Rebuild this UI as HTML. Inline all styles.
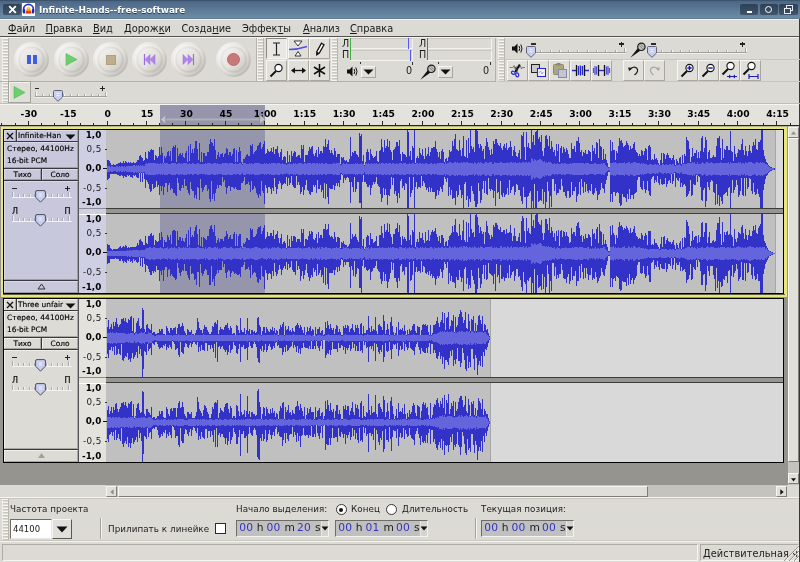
<!DOCTYPE html>
<html><head><meta charset="utf-8"><title>Infinite-Hands--free-software</title>
<style>
html,body{margin:0;padding:0;}
body{width:800px;height:562px;overflow:hidden;background:#dcdad5;position:relative;font-family:"DejaVu Sans","Liberation Sans",sans-serif;color:#1a1a1a;}
div,span,svg{position:absolute;box-sizing:border-box;}
.t{white-space:nowrap;line-height:1;}
.menu{font-size:9.8px;top:24px;color:#1a1a1a;}
.menu u{text-decoration:underline;text-underline-offset:1px;}
.grip{width:7px;background:repeating-linear-gradient(to bottom,#f6f5f2 0,#f6f5f2 1px,#c9c6bf 1px,#c9c6bf 2px,#dcdad5 2px,#dcdad5 3px);border-left:1px solid #efeeea;border-right:1px solid #b9b6af;}
.btn{background:#e1dfda;border:1px solid;border-color:#f7f6f3 #aaa79f #aaa79f #f7f6f3;}
.lbl{font-size:8.75px;color:#1c1c1c;letter-spacing:0.06px;}
.tl{font-size:7.4px;color:#000;-webkit-text-stroke:0.15px #000;}
.vr{font-size:8.8px;color:#222;letter-spacing:0.35px;}
.vrb{font-size:8.8px;font-weight:bold;color:#000;}
.rl{font-size:9.2px;font-weight:bold;color:#000;top:109.3px;}
.tc{height:17px;width:93px;background:#c0c0c0;border:1px solid;border-color:#6e6c67 #f4f3f0 #f4f3f0 #6e6c67;top:520px;}
.tc span{font-size:10.7px;top:1.5px;}
.tc .d{color:#3434c0;}
.tc .u{color:#222;}
#w{left:0;top:0;width:800px;height:562px;will-change:transform;}
</style></head><body><div id="w">

<div style="left:0;top:0;width:800px;height:19px;background:linear-gradient(to bottom,#2f4257 0,#496583 1px,#4d6987 2px,#5d7a97 10px,#6d8aa5 18px,#5a738c 19px);"></div>
<div style="left:3px;top:4px;width:18px;height:11px;border-radius:2px;background:linear-gradient(#2e4155,#41566c);"></div>
<svg style="left:8px;top:5px" width="9" height="9" viewBox="0 0 9 9"><path d="M1.2 1.2L7.8 7.8M7.8 1.2L1.2 7.8" stroke="#fff" stroke-width="1.9"/></svg>
<svg style="left:22px;top:3px" width="13" height="13" viewBox="0 0 13 13"><rect width="13" height="13" fill="#fff"/><path d="M1.6 9V6.2a4.9 4.9 0 0 1 9.8 0V9" fill="none" stroke="#2a35c8" stroke-width="1.7"/><rect x="0.8" y="6" width="2.4" height="4.6" rx="1" fill="#1c28b8"/><rect x="9.8" y="6" width="2.4" height="4.6" rx="1" fill="#1c28b8"/><path d="M3.4 10.2 5 5.2 6.5 3.4 8 5.2 9.6 10.2Z" fill="#f39a12"/><path d="M3.6 10.4 4.6 7.6 6.5 8.6 8.4 7.6 9.4 10.4Z" fill="#e4311a"/><path d="M5.3 5.4 6.5 3.6 7.7 5.4 6.5 6.4Z" fill="#ffd92e"/></svg>
<span class="t" style="left:39px;top:5.5px;font-size:8.9px;font-weight:bold;color:#fff;text-shadow:0 1px 0 #2c3f54;">Infinite-Hands--free-software</span>
<div style="left:740px;top:4px;width:18px;height:11px;border-radius:2px;background:linear-gradient(#2d4054,#40556b);"></div>
<div style="left:760px;top:4px;width:18px;height:11px;border-radius:2px;background:linear-gradient(#2d4054,#40556b);"></div>
<div style="left:779px;top:4px;width:19px;height:11px;border-radius:2px;background:linear-gradient(#2d4054,#40556b);"></div>
<div style="left:747px;top:11px;width:5px;height:2px;background:#fff;"></div>
<div style="left:765px;top:5.700px;width:7px;height:7px;border:1.700px solid #fff;border-radius:50%;"></div>
<div style="left:786px;top:5px;width:7px;height:6px;border:1px solid #e8edf2;border-top-width:1.500px;"></div>
<div style="left:783.500px;top:7.500px;width:7px;height:6px;border:1px solid #e8edf2;border-top-width:1.500px;background:#364b60;"></div>
<div style="left:0;top:19px;width:800px;height:17px;background:#dcdad5;border-top:1px solid #f3f2ef;"></div>
<span class="t menu" style="left:8px;"><u>Ф</u>айл</span>
<span class="t menu" style="left:45.5px;"><u>П</u>равка</span>
<span class="t menu" style="left:93px;"><u>В</u>ид</span>
<span class="t menu" style="left:124px;">Дорож<u>к</u>и</span>
<span class="t menu" style="left:181.5px;">Созда<u>н</u>ие</span>
<span class="t menu" style="left:242px;">Эффек<u>т</u>ы</span>
<span class="t menu" style="left:303px;"><u>А</u>нализ</span>
<span class="t menu" style="left:350px;"><u>С</u>правка</span>
<div style="left:0;top:36px;width:800px;height:1px;background:#55534f;"></div>
<div style="left:0;top:37px;width:800px;height:1px;background:#f4f3f0;"></div>
<div style="left:799px;top:19px;width:1px;height:543px;background:#3a3936;"></div>
<div class="grip" style="left:2px;top:38px;height:43px;"></div>
<div style="left:0px;top:81px;width:257px;height:1px;background:#b5b2ab;"></div>
<div style="left:256px;top:38px;width:1px;height:44px;background:#b5b2ab;"></div>
<div style="left:14.0px;top:41.5px;width:35px;height:35px;border-radius:50%;background:linear-gradient(135deg,rgba(255,255,255,0.75) 10%,rgba(255,255,255,0) 48%,rgba(0,0,0,0) 52%,rgba(60,55,45,0.22) 90%),radial-gradient(circle closest-side,#e6e4e0 0,#e6e4e0 60%,#d6d3cd 70%,#e9e7e3 82%,#d9d6d0 94%,#dcdad5 100%);"></div>
<div style="left:53.5px;top:41.5px;width:35px;height:35px;border-radius:50%;background:linear-gradient(135deg,rgba(255,255,255,0.75) 10%,rgba(255,255,255,0) 48%,rgba(0,0,0,0) 52%,rgba(60,55,45,0.22) 90%),radial-gradient(circle closest-side,#e6e4e0 0,#e6e4e0 60%,#d6d3cd 70%,#e9e7e3 82%,#d9d6d0 94%,#dcdad5 100%);"></div>
<div style="left:93.0px;top:41.5px;width:35px;height:35px;border-radius:50%;background:linear-gradient(135deg,rgba(255,255,255,0.75) 10%,rgba(255,255,255,0) 48%,rgba(0,0,0,0) 52%,rgba(60,55,45,0.22) 90%),radial-gradient(circle closest-side,#e6e4e0 0,#e6e4e0 60%,#d6d3cd 70%,#e9e7e3 82%,#d9d6d0 94%,#dcdad5 100%);"></div>
<div style="left:132.0px;top:41.5px;width:35px;height:35px;border-radius:50%;background:linear-gradient(135deg,rgba(255,255,255,0.75) 10%,rgba(255,255,255,0) 48%,rgba(0,0,0,0) 52%,rgba(60,55,45,0.22) 90%),radial-gradient(circle closest-side,#e6e4e0 0,#e6e4e0 60%,#d6d3cd 70%,#e9e7e3 82%,#d9d6d0 94%,#dcdad5 100%);"></div>
<div style="left:171.0px;top:41.5px;width:35px;height:35px;border-radius:50%;background:linear-gradient(135deg,rgba(255,255,255,0.75) 10%,rgba(255,255,255,0) 48%,rgba(0,0,0,0) 52%,rgba(60,55,45,0.22) 90%),radial-gradient(circle closest-side,#e6e4e0 0,#e6e4e0 60%,#d6d3cd 70%,#e9e7e3 82%,#d9d6d0 94%,#dcdad5 100%);"></div>
<div style="left:216.0px;top:41.5px;width:35px;height:35px;border-radius:50%;background:linear-gradient(135deg,rgba(255,255,255,0.75) 10%,rgba(255,255,255,0) 48%,rgba(0,0,0,0) 52%,rgba(60,55,45,0.22) 90%),radial-gradient(circle closest-side,#e6e4e0 0,#e6e4e0 60%,#d6d3cd 70%,#e9e7e3 82%,#d9d6d0 94%,#dcdad5 100%);"></div>
<div style="left:27px;top:55px;width:4px;height:9px;background:#3d5fe0;"></div><div style="left:33px;top:55px;width:4px;height:9px;background:#3d5fe0;"></div>
<svg style="left:65px;top:52px" width="13" height="15"><path d="M1 1.5L12 7.5L1 13.5Z" fill="#6bcf6b" stroke="#58b858" stroke-width="0.6"/></svg>
<div style="left:106px;top:55px;width:10px;height:10px;background:#bfae8c;border:1px solid #b0a080;"></div>
<svg style="left:143px;top:53px" width="13" height="13"><path d="M1.5 1V12" stroke="#9a6edc" stroke-width="1.2"/><path d="M7 1.5V11.5L2 6.5Z M12 1.5V11.5L7 6.5Z" fill="#b086ea" stroke="#9a6edc" stroke-width="0.5"/></svg>
<svg style="left:182px;top:53px" width="13" height="13"><path d="M11.5 1V12" stroke="#9a6edc" stroke-width="1.2"/><path d="M1 1.5V11.5L6 6.5Z M6 1.5V11.5L11 6.5Z" fill="#b086ea" stroke="#9a6edc" stroke-width="0.5"/></svg>
<div style="left:227px;top:53px;width:13px;height:13px;border-radius:50%;background:#c87878;border:1px solid #b86a6a;"></div>
<div class="grip" style="left:257px;top:38px;height:43px;"></div>
<div style="left:257px;top:81px;width:76px;height:1px;background:#b5b2ab;"></div>
<div style="left:331px;top:38px;width:1px;height:44px;background:#b5b2ab;"></div>
<div class="btn" style="left:266px;top:38px;width:21px;height:21px;"></div>
<div class="btn" style="left:288px;top:38px;width:21px;height:21px;"></div>
<div class="btn" style="left:309px;top:38px;width:21px;height:21px;"></div>
<div class="btn" style="left:266px;top:60px;width:21px;height:21px;"></div>
<div class="btn" style="left:288px;top:60px;width:21px;height:21px;"></div>
<div class="btn" style="left:309px;top:60px;width:21px;height:21px;"></div>
<div style="left:266px;top:38px;width:21px;height:21px;background:#e9e7e3;border:1px solid;border-color:#8d8a84 #f7f6f3 #f7f6f3 #8d8a84;"></div>
<svg style="left:272px;top:42px" width="9" height="14"><path d="M1 1H8M1 13H8M4.500 1V13" stroke="#222" stroke-width="1.150" fill="none"/></svg>
<svg style="left:288px;top:38px" width="21" height="21"><path d="M6 3H14L10 8Z" fill="#fff" stroke="#222" stroke-width="0.9"/><path d="M7 18H13L10 13.5Z" fill="#fff" stroke="#222" stroke-width="0.9"/><path d="M1 11.5Q10 11.5 19 8.5" stroke="#5050e8" stroke-width="1.5" fill="none"/></svg>
<svg style="left:309px;top:38px" width="21" height="21"><path d="M12.500 5.200L15 6.700L10.300 15L7.800 16.700L7.800 13.700Z" fill="#fff" stroke="#111" stroke-width="1.300"/><path d="M7.800 13.700L10.300 15L7.800 16.700Z" fill="#111"/></svg>
<svg style="left:266px;top:60px" width="21" height="21"><circle cx="12.5" cy="8" r="3.6" fill="#fff" stroke="#111" stroke-width="1.1"/><path d="M10 11L4.5 16.5" stroke="#111" stroke-width="1.8"/></svg>
<svg style="left:288px;top:60px" width="21" height="21"><path d="M4 10.5H17" stroke="#111" stroke-width="1.3"/><path d="M3 10.5L7 7.5V13.5Z M18 10.5L14 7.5V13.5Z" fill="#111"/></svg>
<svg style="left:309px;top:60px" width="21" height="21"><path d="M10.5 4V17M5 7L16 14M16 7L5 14" stroke="#111" stroke-width="1.5"/></svg>
<div class="grip" style="left:331px;top:38px;height:43px;"></div>
<div style="left:331px;top:81px;width:165px;height:1px;background:#b5b2ab;"></div>
<div style="left:495px;top:38px;width:1px;height:44px;background:#b5b2ab;"></div>
<span class="t" style="left:342px;top:39px;font-size:9.6px;">Л</span><span class="t" style="left:342px;top:50px;font-size:9.6px;">П</span>
<div style="left:350px;top:38px;width:63px;height:11px;background:#dcdad4;border-bottom:1px solid #f4f3f0;border-right:1px solid #f4f3f0;border-top:1px solid #c9c6c0;"></div>
<div style="left:350px;top:50px;width:63px;height:11px;background:#dcdad4;border-bottom:1px solid #f4f3f0;border-right:1px solid #f4f3f0;border-top:1px solid #c9c6c0;"></div>
<div style="left:350px;top:38px;width:1px;height:22px;background:#3fae3f;"></div>
<div style="left:408px;top:38px;width:1px;height:11px;background:#5656f2;"></div>
<div style="left:410px;top:50px;width:1px;height:11px;background:#5656f2;"></div>
<div style="left:360px;top:62px;width:1px;height:2px;background:#333;"></div>
<div style="left:412px;top:62px;width:1px;height:3px;background:#333;"></div>
<span class="t" style="left:406px;top:66px;font-size:9.6px;">0</span>
<svg style="left:346px;top:65px" width="13" height="13"><path d="M1 4.5H3.5L6.5 1.5V11.5L3.5 8.5H1Z" fill="#111"/><path d="M8 4Q9.6 6.5 8 9M9.8 2.5Q12.2 6.5 9.8 10.5" stroke="#111" stroke-width="1" fill="none"/></svg>
<div class="btn" style="left:361px;top:66px;width:15px;height:12px;"></div>
<svg style="left:363px;top:69px" width="11" height="6"><path d="M0.5 0.5H10.5L5.5 5.5Z" fill="#111"/></svg>
<span class="t" style="left:419px;top:39px;font-size:9.6px;">Л</span><span class="t" style="left:419px;top:50px;font-size:9.6px;">П</span>
<div style="left:427px;top:38px;width:65px;height:11px;background:#dcdad4;border-bottom:1px solid #f4f3f0;border-right:1px solid #f4f3f0;border-top:1px solid #c9c6c0;"></div>
<div style="left:427px;top:50px;width:65px;height:11px;background:#dcdad4;border-bottom:1px solid #f4f3f0;border-right:1px solid #f4f3f0;border-top:1px solid #c9c6c0;"></div>
<div style="left:427px;top:38px;width:1px;height:22px;background:#c04a4a;"></div>
<div style="left:438px;top:62px;width:1px;height:2px;background:#333;"></div>
<div style="left:490px;top:62px;width:1px;height:3px;background:#333;"></div>
<span class="t" style="left:483px;top:66px;font-size:9.6px;">0</span>
<svg style="left:420px;top:64px" width="17" height="17"><path d="M0.300 15.700L8.300 5.600L10.900 8.200Z" fill="#111"/><circle cx="11.400" cy="4.800" r="3.700" fill="#c4c4c4" stroke="#1a1a1a" stroke-width="1.200"/><path d="M9.200 3.400L12.800 7M10.600 2.200L13.800 5.400" stroke="#777" stroke-width="0.900"/></svg>
<div class="btn" style="left:438px;top:66px;width:15px;height:12px;"></div>
<svg style="left:440px;top:69px" width="11" height="6"><path d="M0.5 0.5H10.5L5.5 5.5Z" fill="#111"/></svg>
<div class="grip" style="left:498px;top:38px;height:21px;"></div>
<div style="left:498px;top:59px;width:302px;height:1px;background:#c9c6c0;"></div>
<svg style="left:511px;top:42px" width="13" height="13"><path d="M1 4.5H3.5L6.5 1.5V11.5L3.5 8.5H1Z" fill="#111"/><path d="M8 4Q9.6 6.5 8 9M9.8 2.5Q12.2 6.5 9.8 10.5" stroke="#111" stroke-width="1" fill="none"/></svg>
<div style="left:527px;top:52px;width:99px;height:1px;background:#a3a19b;"></div>
<div style="left:527px;top:53px;width:99px;height:1px;background:#efeeea;"></div>
<div style="left:531px;top:48px;width:1px;height:4px;background:#a9a7a1;"></div>
<div style="left:532px;top:48px;width:1px;height:4px;background:#fbfaf8;"></div>
<div style="left:540px;top:50px;width:1px;height:2px;background:#a9a7a1;"></div>
<div style="left:541px;top:50px;width:1px;height:2px;background:#fbfaf8;"></div>
<div style="left:550px;top:50px;width:1px;height:2px;background:#a9a7a1;"></div>
<div style="left:551px;top:50px;width:1px;height:2px;background:#fbfaf8;"></div>
<div style="left:559px;top:50px;width:1px;height:2px;background:#a9a7a1;"></div>
<div style="left:560px;top:50px;width:1px;height:2px;background:#fbfaf8;"></div>
<div style="left:568px;top:50px;width:1px;height:2px;background:#a9a7a1;"></div>
<div style="left:569px;top:50px;width:1px;height:2px;background:#fbfaf8;"></div>
<div style="left:577px;top:50px;width:1px;height:2px;background:#a9a7a1;"></div>
<div style="left:578px;top:50px;width:1px;height:2px;background:#fbfaf8;"></div>
<div style="left:587px;top:50px;width:1px;height:2px;background:#a9a7a1;"></div>
<div style="left:588px;top:50px;width:1px;height:2px;background:#fbfaf8;"></div>
<div style="left:596px;top:50px;width:1px;height:2px;background:#a9a7a1;"></div>
<div style="left:597px;top:50px;width:1px;height:2px;background:#fbfaf8;"></div>
<div style="left:605px;top:50px;width:1px;height:2px;background:#a9a7a1;"></div>
<div style="left:606px;top:50px;width:1px;height:2px;background:#fbfaf8;"></div>
<div style="left:615px;top:50px;width:1px;height:2px;background:#a9a7a1;"></div>
<div style="left:616px;top:50px;width:1px;height:2px;background:#fbfaf8;"></div>
<div style="left:624px;top:48px;width:1px;height:4px;background:#a9a7a1;"></div>
<div style="left:625px;top:48px;width:1px;height:4px;background:#fbfaf8;"></div>
<svg style="left:526px;top:45.7px" width="10" height="12"><path d="M1.500 0.500H8.500Q9.500 0.500 9.500 1.500V7L5 11.300L0.500 7V1.500Q0.500 0.500 1.500 0.500Z" fill="#cbcfee" stroke="#55596e" stroke-width="0.9"/><path d="M3.500 3.500H6.500M3.500 5.500H6.500" stroke="#f4f5fc" stroke-width="0.9"/></svg>
<div style="left:531px;top:43.0px;width:4.500px;height:1.500px;background:#2a2a2a;"></div>
<div style="left:619px;top:43.3px;width:5px;height:1.400px;background:#222;"></div><div style="left:620.8px;top:41.5px;width:1.400px;height:5px;background:#222;"></div>
<svg style="left:630px;top:41.5px" width="17" height="17"><path d="M0.300 15.700L8.300 5.600L10.900 8.200Z" fill="#111"/><circle cx="11.400" cy="4.800" r="3.700" fill="#c4c4c4" stroke="#1a1a1a" stroke-width="1.200"/><path d="M9.200 3.400L12.800 7M10.600 2.200L13.800 5.400" stroke="#777" stroke-width="0.900"/></svg>
<div style="left:648px;top:52px;width:99px;height:1px;background:#a3a19b;"></div>
<div style="left:648px;top:53px;width:99px;height:1px;background:#efeeea;"></div>
<div style="left:652px;top:48px;width:1px;height:4px;background:#a9a7a1;"></div>
<div style="left:653px;top:48px;width:1px;height:4px;background:#fbfaf8;"></div>
<div style="left:661px;top:50px;width:1px;height:2px;background:#a9a7a1;"></div>
<div style="left:662px;top:50px;width:1px;height:2px;background:#fbfaf8;"></div>
<div style="left:671px;top:50px;width:1px;height:2px;background:#a9a7a1;"></div>
<div style="left:672px;top:50px;width:1px;height:2px;background:#fbfaf8;"></div>
<div style="left:680px;top:50px;width:1px;height:2px;background:#a9a7a1;"></div>
<div style="left:681px;top:50px;width:1px;height:2px;background:#fbfaf8;"></div>
<div style="left:689px;top:50px;width:1px;height:2px;background:#a9a7a1;"></div>
<div style="left:690px;top:50px;width:1px;height:2px;background:#fbfaf8;"></div>
<div style="left:698px;top:50px;width:1px;height:2px;background:#a9a7a1;"></div>
<div style="left:699px;top:50px;width:1px;height:2px;background:#fbfaf8;"></div>
<div style="left:708px;top:50px;width:1px;height:2px;background:#a9a7a1;"></div>
<div style="left:709px;top:50px;width:1px;height:2px;background:#fbfaf8;"></div>
<div style="left:717px;top:50px;width:1px;height:2px;background:#a9a7a1;"></div>
<div style="left:718px;top:50px;width:1px;height:2px;background:#fbfaf8;"></div>
<div style="left:726px;top:50px;width:1px;height:2px;background:#a9a7a1;"></div>
<div style="left:727px;top:50px;width:1px;height:2px;background:#fbfaf8;"></div>
<div style="left:736px;top:50px;width:1px;height:2px;background:#a9a7a1;"></div>
<div style="left:737px;top:50px;width:1px;height:2px;background:#fbfaf8;"></div>
<div style="left:745px;top:48px;width:1px;height:4px;background:#a9a7a1;"></div>
<div style="left:746px;top:48px;width:1px;height:4px;background:#fbfaf8;"></div>
<svg style="left:647px;top:45.7px" width="10" height="12"><path d="M1.500 0.500H8.500Q9.500 0.500 9.500 1.500V7L5 11.300L0.500 7V1.500Q0.500 0.500 1.500 0.500Z" fill="#cbcfee" stroke="#55596e" stroke-width="0.9"/><path d="M3.500 3.500H6.500M3.500 5.500H6.500" stroke="#f4f5fc" stroke-width="0.9"/></svg>
<div style="left:651px;top:43.0px;width:4.500px;height:1.500px;background:#2a2a2a;"></div>
<div style="left:740px;top:43.3px;width:5px;height:1.400px;background:#222;"></div><div style="left:741.8px;top:41.5px;width:1.400px;height:5px;background:#222;"></div>
<div class="grip" style="left:498px;top:60px;height:21px;"></div>
<div style="left:498px;top:81px;width:302px;height:1px;background:#c9c6c0;"></div>
<div class="btn" style="left:507px;top:60px;width:21px;height:21px;"></div>
<div class="btn" style="left:528px;top:60px;width:21px;height:21px;"></div>
<div class="btn" style="left:549px;top:60px;width:21px;height:21px;"></div>
<div class="btn" style="left:570px;top:60px;width:21px;height:21px;"></div>
<div class="btn" style="left:591px;top:60px;width:21px;height:21px;"></div>
<div class="btn" style="left:623px;top:60px;width:21px;height:21px;"></div>
<div class="btn" style="left:644px;top:60px;width:21px;height:21px;"></div>
<div class="btn" style="left:677px;top:60px;width:21px;height:21px;"></div>
<div class="btn" style="left:698px;top:60px;width:21px;height:21px;"></div>
<div class="btn" style="left:719px;top:60px;width:21px;height:21px;"></div>
<div class="btn" style="left:740px;top:60px;width:21px;height:21px;"></div>
<svg style="left:507px;top:60px" width="21" height="21"><path d="M2.500 7.500H6L7 5.500L8.200 9.500L9.200 6.500L10 7.500M12.500 7.500L13.500 6L14.500 9L15.300 7.500H18" stroke="#555" stroke-width="0.700" fill="none"/><path d="M12.800 4.500L8.300 12" stroke="#111" stroke-width="2.100"/><path d="M8.500 7L10.500 11.500" stroke="#333" stroke-width="0.900"/><ellipse cx="6.300" cy="12.800" rx="1.900" ry="1.500" transform="rotate(25 6.300 12.800)" fill="none" stroke="#2a2ad8" stroke-width="1.200"/><ellipse cx="10.200" cy="14.800" rx="1.500" ry="2" transform="rotate(-20 10.200 14.800)" fill="none" stroke="#2a2ad8" stroke-width="1.200"/></svg>
<svg style="left:528px;top:60px" width="21" height="21"><rect x="3.5" y="4.5" width="8" height="8" fill="#c9c9c9" stroke="#222" stroke-width="1"/><rect x="9.500" y="8.500" width="8" height="8" fill="#f4f4ff" stroke="#2828d0" stroke-width="1.1"/><path d="M11 13L12.5 11L14 14L15.5 12" stroke="#7a7ad8" stroke-width="0.7" fill="none"/></svg>
<svg style="left:549px;top:60px" width="21" height="21"><rect x="4.500" y="4.500" width="10" height="10" rx="1" fill="#a9a684" stroke="#8d8a6c" stroke-width="1"/><rect x="7.5" y="3" width="4" height="2.500" fill="#8d8a6c"/><rect x="9.500" y="9.500" width="8" height="8" fill="#c5c5d0" stroke="#8585b8" stroke-width="1"/></svg>
<svg style="left:570px;top:60px" width="21" height="21"><path d="M2 10.5H6M15 10.5H19" stroke="#2828d0" stroke-width="1.3"/><path d="M6.5 5V16M14.5 5V16" stroke="#111" stroke-width="1.3"/><path d="M8.5 6V15M10.5 5.500V15.5M12.5 6V15" stroke="#2828d0" stroke-width="1.3"/></svg>
<svg style="left:591px;top:60px" width="21" height="21"><path d="M7 10.5H14" stroke="#2828d0" stroke-width="1.3"/><path d="M7.5 5V16M13.5 5V16" stroke="#111" stroke-width="1.3"/><path d="M2.5 8V13M4 6V15M5.5 6.5V14.5M15.5 6.5V14.5M17 6V15M18.500 8V13" stroke="#5050d8" stroke-width="1.2"/></svg>
<svg style="left:623px;top:60px" width="21" height="21"><path d="M7 9.500Q10.500 5.500 13.500 8Q16.500 11 11.500 15" stroke="#222" stroke-width="1.250" fill="none"/><path d="M5 7.500L9.300 7.700L6.200 11.300Z" fill="#222"/></svg>
<svg style="left:644px;top:60px" width="21" height="21"><path d="M14 9.500Q10.500 5.500 7.500 8Q4.500 11 9.500 15" stroke="#a9a7a1" stroke-width="1.250" fill="none"/><path d="M16 7.500L11.700 7.700L14.800 11.300Z" fill="#a9a7a1"/></svg>
<svg style="left:677px;top:60px" width="21" height="21"><g transform="translate(0 0)"><circle cx="12.5" cy="8" r="3.600" fill="#fff" stroke="#111" stroke-width="1.1"/><path d="M10 11L4.500 16.500" stroke="#111" stroke-width="1.9"/></g><path d="M10.300 8H14.700M12.500 5.800V10.200" stroke="#1c1cb8" stroke-width="1.500"/></svg>
<svg style="left:698px;top:60px" width="21" height="21"><g transform="translate(0 0)"><circle cx="12.5" cy="8" r="3.600" fill="#fff" stroke="#111" stroke-width="1.1"/><path d="M10 11L4.500 16.500" stroke="#111" stroke-width="1.9"/></g><path d="M10.300 8H14.700" stroke="#1c1cb8" stroke-width="1.500"/></svg>
<svg style="left:719px;top:60px" width="21" height="21"><g transform="translate(-1 -2)"><circle cx="12.5" cy="8" r="3.600" fill="#fff" stroke="#111" stroke-width="1.1"/><path d="M10 11L4.500 16.500" stroke="#111" stroke-width="1.9"/></g><path d="M8 16.500H18" stroke="#1c1cb8" stroke-width="1"/><path d="M12.500 16.500L10 14.500V18.500ZM13.500 16.500L16 14.500V18.500Z" fill="#1c1cb8"/></svg>
<svg style="left:740px;top:60px" width="21" height="21"><g transform="translate(-1 -2)"><circle cx="12.5" cy="8" r="3.600" fill="#fff" stroke="#111" stroke-width="1.1"/><path d="M10 11L4.500 16.500" stroke="#111" stroke-width="1.9"/></g><path d="M9 16.500H18M9 14V19M18 14V19" stroke="#1c1cb8" stroke-width="1.2"/></svg>
<div class="grip" style="left:2px;top:82px;height:21px;"></div>
<div style="left:0px;top:103px;width:800px;height:1px;background:#c2bfb8;"></div>
<div style="left:8px;top:81px;width:23px;height:22px;background:#e0ded9;border:1px solid #a5a39d;box-shadow:inset 1px 1px 0 #f3f2ef;"></div>
<svg style="left:13px;top:85px" width="13" height="15"><path d="M1 1.500L12 7.500L1 13.500Z" fill="#6bcf6b" stroke="#58b858" stroke-width="0.6"/></svg>
<div style="left:35px;top:96px;width:72px;height:1px;background:#a3a19b;"></div>
<div style="left:35px;top:97px;width:72px;height:1px;background:#efeeea;"></div>
<div style="left:35px;top:92px;width:1px;height:4px;background:#a9a7a1;"></div>
<div style="left:36px;top:92px;width:1px;height:4px;background:#fbfaf8;"></div>
<div style="left:42px;top:94px;width:1px;height:2px;background:#a9a7a1;"></div>
<div style="left:43px;top:94px;width:1px;height:2px;background:#fbfaf8;"></div>
<div style="left:49px;top:94px;width:1px;height:2px;background:#a9a7a1;"></div>
<div style="left:50px;top:94px;width:1px;height:2px;background:#fbfaf8;"></div>
<div style="left:56px;top:94px;width:1px;height:2px;background:#a9a7a1;"></div>
<div style="left:57px;top:94px;width:1px;height:2px;background:#fbfaf8;"></div>
<div style="left:63px;top:94px;width:1px;height:2px;background:#a9a7a1;"></div>
<div style="left:64px;top:94px;width:1px;height:2px;background:#fbfaf8;"></div>
<div style="left:70px;top:94px;width:1px;height:2px;background:#a9a7a1;"></div>
<div style="left:71px;top:94px;width:1px;height:2px;background:#fbfaf8;"></div>
<div style="left:77px;top:94px;width:1px;height:2px;background:#a9a7a1;"></div>
<div style="left:78px;top:94px;width:1px;height:2px;background:#fbfaf8;"></div>
<div style="left:84px;top:94px;width:1px;height:2px;background:#a9a7a1;"></div>
<div style="left:85px;top:94px;width:1px;height:2px;background:#fbfaf8;"></div>
<div style="left:91px;top:94px;width:1px;height:2px;background:#a9a7a1;"></div>
<div style="left:92px;top:94px;width:1px;height:2px;background:#fbfaf8;"></div>
<div style="left:98px;top:94px;width:1px;height:2px;background:#a9a7a1;"></div>
<div style="left:99px;top:94px;width:1px;height:2px;background:#fbfaf8;"></div>
<div style="left:105px;top:92px;width:1px;height:4px;background:#a9a7a1;"></div>
<div style="left:106px;top:92px;width:1px;height:4px;background:#fbfaf8;"></div>
<svg style="left:52.5px;top:90px" width="10" height="12"><path d="M1.500 0.500H8.500Q9.500 0.500 9.500 1.500V7L5 11.300L0.500 7V1.500Q0.500 0.500 1.500 0.500Z" fill="#cbcfee" stroke="#55596e" stroke-width="0.9"/><path d="M3.500 3.500H6.500M3.500 5.500H6.500" stroke="#f4f5fc" stroke-width="0.9"/></svg>
<div style="left:34.5px;top:87.5px;width:4.500px;height:1.500px;background:#2a2a2a;"></div>
<div style="left:100px;top:87.8px;width:5px;height:1.400px;background:#222;"></div><div style="left:101.8px;top:86px;width:1.400px;height:5px;background:#222;"></div>
<div style="left:0;top:104px;width:799px;height:21px;background:#e4e2dd;border-top:1px solid #f6f5f2;"></div>
<div style="left:160px;top:105px;width:105px;height:20px;background:#9595ae;"></div>
<div style="left:0px;top:125px;width:800px;height:1px;background:#262523;"></div>
<svg style="left:0;top:119px" width="800" height="6" shape-rendering="crispEdges"><path d="M1.5 4V6M15.5 4V6M28.5 2V6M41.5 4V6M54.5 4V6M67.5 2V6M80.5 4V6M93.5 4V6M107.5 2V6M120.5 4V6M133.5 4V6M146.5 2V6M159.5 4V6M172.5 4V6M185.5 2V6M198.5 4V6M212.5 4V6M225.5 2V6M238.5 4V6M251.5 4V6M264.5 2V6M277.5 4V6M290.5 4V6M304.5 2V6M317.5 4V6M330.5 4V6M343.5 2V6M356.5 4V6M369.5 4V6M382.5 2V6M395.5 4V6M409.5 4V6M422.5 2V6M435.5 4V6M448.5 4V6M461.5 2V6M474.5 4V6M487.5 4V6M501.5 2V6M514.5 4V6M527.5 4V6M540.5 2V6M553.5 4V6M566.5 4V6M579.5 2V6M593.5 4V6M606.5 4V6M619.5 2V6M632.5 4V6M645.5 4V6M658.5 2V6M671.5 4V6M684.5 4V6M698.5 2V6M711.5 4V6M724.5 4V6M737.5 2V6M750.5 4V6M763.5 4V6M776.5 2V6M790.5 4V6" stroke="#2b2a28" stroke-width="1"/></svg>
<span class="t rl" style="left:-1.1px;width:60px;text-align:center;">-30</span>
<span class="t rl" style="left:38.3px;width:60px;text-align:center;">-15</span>
<span class="t rl" style="left:77.7px;width:60px;text-align:center;">0</span>
<span class="t rl" style="left:117.1px;width:60px;text-align:center;">15</span>
<span class="t rl" style="left:156.5px;width:60px;text-align:center;">30</span>
<span class="t rl" style="left:195.9px;width:60px;text-align:center;">45</span>
<span class="t rl" style="left:235.3px;width:60px;text-align:center;">1:00</span>
<span class="t rl" style="left:274.7px;width:60px;text-align:center;">1:15</span>
<span class="t rl" style="left:314.1px;width:60px;text-align:center;">1:30</span>
<span class="t rl" style="left:353.5px;width:60px;text-align:center;">1:45</span>
<span class="t rl" style="left:392.9px;width:60px;text-align:center;">2:00</span>
<span class="t rl" style="left:432.4px;width:60px;text-align:center;">2:15</span>
<span class="t rl" style="left:471.8px;width:60px;text-align:center;">2:30</span>
<span class="t rl" style="left:511.2px;width:60px;text-align:center;">2:45</span>
<span class="t rl" style="left:550.6px;width:60px;text-align:center;">3:00</span>
<span class="t rl" style="left:590.0px;width:60px;text-align:center;">3:15</span>
<span class="t rl" style="left:629.4px;width:60px;text-align:center;">3:30</span>
<span class="t rl" style="left:668.8px;width:60px;text-align:center;">3:45</span>
<span class="t rl" style="left:708.2px;width:60px;text-align:center;">4:00</span>
<span class="t rl" style="left:747.6px;width:60px;text-align:center;">4:15</span>
<svg style="left:158px;top:113.500px" width="110" height="11"><path d="M8 5.500H101" stroke="#b2b2b0" stroke-width="1.800"/><path d="M2.300 5.500L7.800 0.500V10.500Z" fill="#c2c2c6" stroke="#8a8a98" stroke-width="0.800"/><path d="M107.200 5.500L101.700 0.500V10.500Z" fill="#c2c2c6" stroke="#8a8a98" stroke-width="0.800"/></svg>
<div style="left:0;top:126px;width:788px;height:359px;background:#95948f;"></div>
<div style="left:1px;top:126px;width:786px;height:171px;background:#e7e77e;border-top:1px solid #b6b684;"></div>
<div style="left:3px;top:129px;width:781px;height:165px;background:#000;"></div>
<div style="left:4px;top:130px;width:74px;height:163px;background:#c8c8dc;"></div>
<div style="left:78px;top:130px;width:1px;height:163px;background:#55555a;"></div>
<div style="left:79px;top:130px;width:27px;height:163px;background:#cfcfe4;"></div>
<div style="left:79px;top:208px;width:27px;height:1px;background:#8c8c96;"></div>
<div style="left:79px;top:214px;width:27px;height:1px;background:#fff;"></div>
<div style="left:4px;top:130px;width:12px;height:12px;border:1px solid;border-color:#dadaea #9c9cac #9c9cac #dadaea;"></div>
<div style="left:17px;top:130px;width:61px;height:12px;border:1px solid;border-color:#dadaea #9c9cac #9c9cac #dadaea;"></div>
<div style="left:4px;top:141px;width:74px;height:1px;background:#3a3a3e;"></div>
<div style="left:16px;top:130px;width:1px;height:11px;background:#3a3a3e;"></div>
<svg style="left:6px;top:132px" width="8" height="8"><path d="M1 1L7 7M7 1L1 7" stroke="#111" stroke-width="1.3"/></svg>
<span class="t tl" style="left:18px;top:132px;">Infinite-Han</span>
<svg style="left:65px;top:134px" width="11" height="6"><path d="M0.500 0.500H10.500L5.500 5.500Z" fill="#111"/></svg>
<div style="left:4px;top:142px;width:74px;height:26px;border:1px solid;border-color:#dadaea #9c9cac #9c9cac #dadaea;"></div>
<span class="t tl" style="left:7px;top:145px;letter-spacing:0.1px;">Стерео, 44100Hz</span>
<span class="t tl" style="left:7px;top:157px;">16-bit PCM</span>
<div style="left:4px;top:168px;width:74px;height:1px;background:#3a3a3e;"></div>
<div style="left:4px;top:169px;width:37px;height:11px;border:1px solid;border-color:#dadaea #9c9cac #9c9cac #dadaea;"></div>
<div style="left:42px;top:169px;width:36px;height:11px;border:1px solid;border-color:#dadaea #9c9cac #9c9cac #dadaea;"></div>
<div style="left:41px;top:169px;width:1px;height:11px;background:#3a3a3e;"></div>
<span class="t tl" style="left:4px;width:37px;text-align:center;top:171px;">Тихо</span>
<span class="t tl" style="left:42px;width:36px;text-align:center;top:171px;">Соло</span>
<div style="left:4px;top:180px;width:74px;height:1px;background:#3a3a3e;"></div>
<div style="left:4px;top:181px;width:74px;height:99px;border:1px solid;border-color:#dadaea #9c9cac #9c9cac #dadaea;"></div>
<div style="left:12px;top:197px;width:60px;height:1px;background:#f3f3ea;"></div>
<div style="left:12px;top:192px;width:1px;height:5px;background:#a9a9b8;"></div>
<div style="left:13px;top:192px;width:1px;height:5px;background:#f1f1e4;"></div>
<div style="left:18px;top:194px;width:1px;height:3px;background:#a9a9b8;"></div>
<div style="left:19px;top:194px;width:1px;height:3px;background:#f1f1e4;"></div>
<div style="left:23px;top:194px;width:1px;height:3px;background:#a9a9b8;"></div>
<div style="left:24px;top:194px;width:1px;height:3px;background:#f1f1e4;"></div>
<div style="left:29px;top:194px;width:1px;height:3px;background:#a9a9b8;"></div>
<div style="left:30px;top:194px;width:1px;height:3px;background:#f1f1e4;"></div>
<div style="left:34px;top:194px;width:1px;height:3px;background:#a9a9b8;"></div>
<div style="left:35px;top:194px;width:1px;height:3px;background:#f1f1e4;"></div>
<div style="left:40px;top:194px;width:1px;height:3px;background:#a9a9b8;"></div>
<div style="left:41px;top:194px;width:1px;height:3px;background:#f1f1e4;"></div>
<div style="left:46px;top:194px;width:1px;height:3px;background:#a9a9b8;"></div>
<div style="left:47px;top:194px;width:1px;height:3px;background:#f1f1e4;"></div>
<div style="left:51px;top:194px;width:1px;height:3px;background:#a9a9b8;"></div>
<div style="left:52px;top:194px;width:1px;height:3px;background:#f1f1e4;"></div>
<div style="left:57px;top:194px;width:1px;height:3px;background:#a9a9b8;"></div>
<div style="left:58px;top:194px;width:1px;height:3px;background:#f1f1e4;"></div>
<div style="left:62px;top:194px;width:1px;height:3px;background:#a9a9b8;"></div>
<div style="left:63px;top:194px;width:1px;height:3px;background:#f1f1e4;"></div>
<div style="left:68px;top:192px;width:1px;height:5px;background:#a9a9b8;"></div>
<div style="left:69px;top:192px;width:1px;height:5px;background:#f1f1e4;"></div>
<svg style="left:35px;top:190px" width="11" height="13"><path d="M2 0.600H9Q10.400 0.600 10.400 2V7.200L5.500 12.200L0.600 7.200V2Q0.600 0.600 2 0.600Z" fill="#cbcfee" stroke="#4c4f63" stroke-width="1"/><path d="M4 4H7M4 6H7" stroke="#f4f5fc" stroke-width="0.9"/></svg>
<div style="left:12px;top:187.5px;width:4.500px;height:1.500px;background:#2a2a2a;"></div>
<div style="left:65px;top:187.8px;width:5px;height:1.400px;background:#222;"></div><div style="left:66.8px;top:186px;width:1.400px;height:5px;background:#222;"></div>
<span class="t tl" style="left:12px;top:208px;font-size:8px;">Л</span><span class="t tl" style="left:64.500px;top:208px;font-size:8px;">П</span>
<div style="left:12px;top:221px;width:60px;height:1px;background:#f3f3ea;"></div>
<div style="left:12px;top:216px;width:1px;height:5px;background:#a9a9b8;"></div>
<div style="left:13px;top:216px;width:1px;height:5px;background:#f1f1e4;"></div>
<div style="left:18px;top:218px;width:1px;height:3px;background:#a9a9b8;"></div>
<div style="left:19px;top:218px;width:1px;height:3px;background:#f1f1e4;"></div>
<div style="left:23px;top:218px;width:1px;height:3px;background:#a9a9b8;"></div>
<div style="left:24px;top:218px;width:1px;height:3px;background:#f1f1e4;"></div>
<div style="left:29px;top:218px;width:1px;height:3px;background:#a9a9b8;"></div>
<div style="left:30px;top:218px;width:1px;height:3px;background:#f1f1e4;"></div>
<div style="left:34px;top:218px;width:1px;height:3px;background:#a9a9b8;"></div>
<div style="left:35px;top:218px;width:1px;height:3px;background:#f1f1e4;"></div>
<div style="left:40px;top:218px;width:1px;height:3px;background:#a9a9b8;"></div>
<div style="left:41px;top:218px;width:1px;height:3px;background:#f1f1e4;"></div>
<div style="left:46px;top:218px;width:1px;height:3px;background:#a9a9b8;"></div>
<div style="left:47px;top:218px;width:1px;height:3px;background:#f1f1e4;"></div>
<div style="left:51px;top:218px;width:1px;height:3px;background:#a9a9b8;"></div>
<div style="left:52px;top:218px;width:1px;height:3px;background:#f1f1e4;"></div>
<div style="left:57px;top:218px;width:1px;height:3px;background:#a9a9b8;"></div>
<div style="left:58px;top:218px;width:1px;height:3px;background:#f1f1e4;"></div>
<div style="left:62px;top:218px;width:1px;height:3px;background:#a9a9b8;"></div>
<div style="left:63px;top:218px;width:1px;height:3px;background:#f1f1e4;"></div>
<div style="left:68px;top:216px;width:1px;height:5px;background:#a9a9b8;"></div>
<div style="left:69px;top:216px;width:1px;height:5px;background:#f1f1e4;"></div>
<svg style="left:35px;top:214px" width="11" height="13"><path d="M2 0.600H9Q10.400 0.600 10.400 2V7.200L5.500 12.200L0.600 7.200V2Q0.600 0.600 2 0.600Z" fill="#cbcfee" stroke="#4c4f63" stroke-width="1"/><path d="M4 4H7M4 6H7" stroke="#f4f5fc" stroke-width="0.9"/></svg>
<div style="left:4px;top:280px;width:74px;height:1px;background:#3a3a3e;"></div>
<div style="left:4px;top:281px;width:74px;height:12px;border:1px solid;border-color:#dadaea #9c9cac #9c9cac #dadaea;"></div>
<svg style="left:37px;top:283px" width="9" height="7"><path d="M4.500 1L8 6H1Z" fill="#c8c8dc" stroke="#333" stroke-width="1"/></svg>
<svg style="left:106px;top:130px" width="677" height="78" shape-rendering="crispEdges"><rect x="0" y="0" width="669" height="78" fill="#c0c0c0"/><rect x="669" y="0" width="8" height="78" fill="#d9d9d9"/><rect x="669" y="0" width="1" height="78" fill="#a6a6a6"/><rect x="54" y="0" width="105" height="78" fill="#9595ac"/><path d="M1.5 30V50M2.5 30V49M3.5 31V48M4.5 33V44M5.5 35V44M6.5 35V44M7.5 34V44M8.5 35V44M9.5 35V44M10.5 34V44M11.5 34V45M12.5 33V45M13.5 33V46M14.5 32V46M15.5 33V45M16.5 33V46M17.5 31V48M18.5 33V46M19.5 31V47M20.5 32V47M21.5 33V45M22.5 32V46M23.5 33V45M24.5 32V47M25.5 33V47M26.5 33V48M27.5 32V45M28.5 33V46M29.5 33V45M30.5 32V47M31.5 30V48M32.5 30V48M33.5 26V43M34.5 25V52M35.5 27V43M36.5 28V52M37.5 31V43M38.5 30V49M39.5 22V58M40.5 28V50M41.5 29V52M42.5 21V54M43.5 22V59M44.5 20V62M45.5 19V61M46.5 20V54M47.5 20V59M48.5 30V58M49.5 25V57M50.5 26V51M51.5 28V57M52.5 26V55M53.5 17V65M54.5 25V56M55.5 17V61M56.5 23V56M57.5 33V65M58.5 26V57M59.5 28V53M60.5 26V53M61.5 22V62M62.5 21V55M63.5 26V53M64.5 21V60M65.5 31V58M66.5 18V59M67.5 16V63M68.5 17V63M69.5 15V65M70.5 32V66M71.5 18V48M72.5 26V53M73.5 24V60M74.5 23V61M75.5 25V58M76.5 23V55M77.5 27V58M78.5 28V49M79.5 23V56M80.5 21V56M81.5 32V60M82.5 16V63M83.5 31V65M84.5 14V52M85.5 23V59M86.5 19V61M87.5 23V61M88.5 18V68M89.5 11V65M90.5 11V69M91.5 19V57M92.5 30V58M93.5 13V70M94.5 32V49M95.5 22V58M96.5 32V62M97.5 23V60M98.5 23V57M99.5 26V55M100.5 26V55M101.5 22V61M102.5 22V59M103.5 14V69M104.5 9V72M105.5 12V51M106.5 13V69M107.5 16V64M108.5 9V71M109.5 20V63M110.5 29V59M111.5 25V55M112.5 22V58M113.5 27V55M114.5 24V55M115.5 24V56M116.5 23V47M117.5 27V52M118.5 24V50M119.5 23V57M120.5 18V64M121.5 19V58M122.5 25V56M123.5 22V56M124.5 22V61M125.5 26V57M126.5 24V57M127.5 19V58M128.5 18V59M129.5 32V57M130.5 20V59M131.5 32V60M132.5 22V60M133.5 17V60M134.5 21V60M135.5 32V53M136.5 34V53M137.5 29V51M138.5 29V47M139.5 27V55M140.5 25V54M141.5 24V54M142.5 26V52M143.5 26V55M144.5 15V62M145.5 16V51M146.5 14V60M147.5 24V59M148.5 22V56M149.5 21V58M150.5 20V63M151.5 16V65M152.5 15V68M153.5 13V64M154.5 12V66M155.5 19V51M156.5 17V61M157.5 14V63M158.5 11V74M159.5 24V55M160.5 23V58M161.5 19V63M162.5 21V57M163.5 22V57M164.5 21V59M165.5 18V64M166.5 22V58M167.5 17V61M168.5 24V48M169.5 19V57M170.5 19V64M171.5 16V59M172.5 23V54M173.5 27V51M174.5 22V53M175.5 19V59M176.5 30V55M177.5 27V54M178.5 26V53M179.5 27V54M180.5 33V47M181.5 21V56M182.5 32V48M183.5 25V55M184.5 32V53M185.5 21V46M186.5 26V55M187.5 23V57M188.5 21V58M189.5 22V58M190.5 27V46M191.5 26V55M192.5 25V52M193.5 25V55M194.5 28V64M195.5 15V62M196.5 19V57M197.5 15V65M198.5 32V60M199.5 25V55M200.5 25V50M201.5 25V60M202.5 21V61M203.5 17V64M204.5 19V65M205.5 17V62M206.5 16V62M207.5 24V55M208.5 26V57M209.5 23V55M210.5 20V63M211.5 27V50M212.5 17V59M213.5 24V59M214.5 21V55M215.5 21V62M216.5 23V60M217.5 16V68M218.5 17V53M219.5 9V69M220.5 17V54M221.5 14V67M222.5 10V74M223.5 20V58M224.5 23V59M225.5 20V59M226.5 23V59M227.5 25V55M228.5 18V60M229.5 21V56M230.5 27V53M231.5 24V56M232.5 24V53M233.5 24V57M234.5 34V50M235.5 27V44M236.5 28V45M237.5 27V53M238.5 30V48M239.5 31V50M240.5 30V48M241.5 32V47M242.5 32V48M243.5 29V52M244.5 7V73M245.5 26V52M246.5 22V57M247.5 23V62M248.5 21V47M249.5 21V62M250.5 24V59M251.5 25V52M252.5 27V52M253.5 3V73M254.5 6V73M255.5 4V78M256.5 31V52M257.5 25V45M258.5 35V52M259.5 32V52M260.5 22V54M261.5 19V57M262.5 22V57M263.5 30V55M264.5 19V65M265.5 24V58M266.5 26V55M267.5 28V52M268.5 27V54M269.5 26V52M270.5 21V47M271.5 31V54M272.5 32V56M273.5 21V57M274.5 20V64M275.5 9V72M276.5 17V68M277.5 22V58M278.5 10V65M279.5 18V59M280.5 16V65M281.5 9V75M282.5 17V65M283.5 11V66M284.5 20V59M285.5 22V47M286.5 30V55M287.5 20V48M288.5 19V64M289.5 17V61M290.5 12V66M291.5 12V73M292.5 16V63M293.5 10V68M294.5 24V51M295.5 31V49M296.5 22V58M297.5 24V56M298.5 24V60M299.5 25V53M300.5 27V54M301.5 0V78M302.5 2V78M303.5 26V47M304.5 21V67M305.5 30V63M306.5 16V60M307.5 18V47M308.5 0V78M309.5 33V57M310.5 28V52M311.5 26V59M312.5 28V57M313.5 18V57M314.5 23V58M315.5 25V46M316.5 19V56M317.5 26V51M318.5 29V53M319.5 18V57M320.5 26V60M321.5 24V58M322.5 17V62M323.5 26V57M324.5 22V62M325.5 18V58M326.5 18V62M327.5 17V62M328.5 17V62M329.5 11V69M330.5 19V66M331.5 22V60M332.5 27V65M333.5 22V61M334.5 29V57M335.5 21V59M336.5 19V62M337.5 22V55M338.5 32V47M339.5 29V49M340.5 28V52M341.5 31V48M342.5 27V66M343.5 20V57M344.5 22V65M345.5 21V60M346.5 11V69M347.5 16V68M348.5 9V68M349.5 4V75M350.5 19V61M351.5 20V67M352.5 21V65M353.5 10V55M354.5 20V60M355.5 26V68M356.5 18V65M357.5 6V78M358.5 26V54M359.5 27V52M360.5 10V70M361.5 28V66M362.5 8V77M363.5 23V69M364.5 0V72M365.5 16V56M366.5 19V61M367.5 17V64M368.5 22V71M369.5 0V77M370.5 0V77M371.5 1V74M372.5 14V53M373.5 18V61M374.5 14V73M375.5 16V70M376.5 21V59M377.5 19V51M378.5 29V63M379.5 16V51M380.5 8V64M381.5 12V65M382.5 17V48M383.5 20V59M384.5 25V61M385.5 19V59M386.5 24V60M387.5 11V68M388.5 14V61M389.5 9V76M390.5 9V49M391.5 13V63M392.5 15V62M393.5 16V69M394.5 13V51M395.5 18V65M396.5 20V67M397.5 16V63M398.5 14V67M399.5 18V65M400.5 13V64M401.5 20V58M402.5 18V65M403.5 17V50M404.5 11V63M405.5 17V60M406.5 26V57M407.5 20V56M408.5 16V65M409.5 22V62M410.5 26V54M411.5 27V55M412.5 23V60M413.5 20V60M414.5 29V66M415.5 5V71M416.5 6V74M417.5 2V57M418.5 17V67M419.5 30V67M420.5 2V78M421.5 17V67M422.5 13V66M423.5 18V63M424.5 19V61M425.5 0V78M426.5 12V71M427.5 5V78M428.5 15V54M429.5 2V78M430.5 1V78M431.5 0V61M432.5 9V72M433.5 7V71M434.5 12V70M435.5 5V71M436.5 21V59M437.5 26V74M438.5 18V62M439.5 6V78M440.5 5V72M441.5 9V52M442.5 16V61M443.5 6V78M444.5 19V66M445.5 11V77M446.5 17V49M447.5 22V49M448.5 20V61M449.5 26V54M450.5 14V65M451.5 21V63M452.5 14V63M453.5 32V59M454.5 18V60M455.5 16V49M456.5 23V56M457.5 17V62M458.5 19V62M459.5 22V66M460.5 18V68M461.5 20V61M462.5 24V61M463.5 28V68M464.5 28V67M465.5 13V52M466.5 19V65M467.5 19V61M468.5 16V61M469.5 22V57M470.5 11V72M471.5 11V66M472.5 7V64M473.5 13V52M474.5 22V65M475.5 20V49M476.5 26V57M477.5 22V63M478.5 23V52M479.5 20V62M480.5 24V54M481.5 24V61M482.5 20V63M483.5 21V60M484.5 22V61M485.5 31V54M486.5 15V64M487.5 21V65M488.5 18V63M489.5 24V58M490.5 12V61M491.5 13V70M492.5 28V65M493.5 9V64M494.5 16V60M495.5 17V53M496.5 30V58M497.5 19V59M498.5 29V63M499.5 24V54M500.5 30V50M501.5 33V46M502.5 37V42M503.5 37V42M504.5 10V72M505.5 21V64M506.5 12V72M507.5 20V62M508.5 20V62M509.5 30V66M510.5 21V63M511.5 23V62M512.5 16V63M513.5 8V73M514.5 11V76M515.5 10V75M516.5 13V64M517.5 17V67M518.5 16V67M519.5 15V68M520.5 11V72M521.5 13V64M522.5 15V69M523.5 20V59M524.5 16V69M525.5 19V65M526.5 18V65M527.5 14V69M528.5 12V64M529.5 20V63M530.5 22V62M531.5 23V50M532.5 26V47M533.5 24V47M534.5 26V57M535.5 20V59M536.5 21V60M537.5 25V51M538.5 21V59M539.5 18V63M540.5 19V60M541.5 30V51M542.5 16V61M543.5 15V65M544.5 17V66M545.5 30V49M546.5 29V47M547.5 30V46M548.5 24V53M549.5 29V50M550.5 28V52M551.5 30V46M552.5 33V53M553.5 35V55M554.5 30V49M555.5 23V54M556.5 33V55M557.5 23V54M558.5 24V54M559.5 29V48M560.5 25V57M561.5 23V54M562.5 25V51M563.5 28V50M564.5 28V53M565.5 30V44M566.5 28V54M567.5 25V51M568.5 30V43M569.5 35V57M570.5 29V48M571.5 31V50M572.5 33V51M573.5 28V48M574.5 27V57M575.5 34V53M576.5 25V57M577.5 33V55M578.5 24V54M579.5 26V56M580.5 7V67M581.5 10V66M582.5 11V64M583.5 19V61M584.5 32V50M585.5 27V66M586.5 18V65M587.5 26V54M588.5 23V55M589.5 23V55M590.5 20V45M591.5 28V52M592.5 22V46M593.5 28V47M594.5 21V57M595.5 8V70M596.5 6V71M597.5 22V60M598.5 18V58M599.5 7V77M600.5 10V71M601.5 29V52M602.5 22V57M603.5 20V60M604.5 28V52M605.5 28V50M606.5 27V51M607.5 25V62M608.5 27V63M609.5 27V75M610.5 16V54M611.5 8V74M612.5 8V65M613.5 6V76M614.5 18V67M615.5 30V71M616.5 9V74M617.5 28V65M618.5 19V64M619.5 20V63M620.5 16V62M621.5 16V66M622.5 20V58M623.5 20V57M624.5 1V78M625.5 21V63M626.5 22V50M627.5 31V63M628.5 16V60M629.5 24V57M630.5 27V50M631.5 23V55M632.5 19V67M633.5 20V65M634.5 20V61M635.5 14V48M636.5 9V65M637.5 20V66M638.5 25V48M639.5 16V66M640.5 21V48M641.5 26V59M642.5 21V57M643.5 15V48M644.5 21V49M645.5 23V61M646.5 16V64M647.5 12V53M648.5 15V62M649.5 9V65M650.5 19V64M651.5 20V59M652.5 12V64M653.5 12V67M654.5 10V78M655.5 0V78M656.5 0V78M657.5 20V60M658.5 26V54M659.5 29V49M660.5 32V46M661.5 33V45M662.5 35V43M663.5 36V42M664.5 37V41M665.5 37V41M666.5 38V40M667.5 38V40M668.5 38V40" stroke="#3232c8" stroke-width="1"/><path d="M1.5 36V42M2.5 36V42M3.5 36V42M4.5 37V41M5.5 36V42M6.5 36V42M7.5 37V41M8.5 37V41M9.5 37V41M10.5 36V42M11.5 36V42M12.5 37V41M13.5 36V42M14.5 37V41M15.5 36V42M16.5 36V42M17.5 37V41M18.5 36V42M19.5 37V41M20.5 36V42M21.5 36V42M22.5 36V42M23.5 36V42M24.5 36V42M25.5 36V42M26.5 36V42M27.5 35V43M28.5 35V43M29.5 36V42M30.5 35V43M31.5 36V42M32.5 35V43M33.5 36V42M34.5 35V43M35.5 36V42M36.5 35V43M37.5 36V42M38.5 36V42M39.5 34V44M40.5 33V45M41.5 34V44M42.5 33V45M43.5 33V45M44.5 33V45M45.5 33V45M46.5 33V45M47.5 33V45M48.5 33V45M49.5 33V45M50.5 34V44M51.5 33V45M52.5 34V44M53.5 34V44M54.5 33V45M55.5 34V44M56.5 33V45M57.5 34V44M58.5 33V45M59.5 33V45M60.5 33V45M61.5 33V45M62.5 34V44M63.5 34V44M64.5 34V44M65.5 33V45M66.5 33V45M67.5 33V45M68.5 33V45M69.5 33V45M70.5 34V44M71.5 34V44M72.5 33V45M73.5 33V45M74.5 34V44M75.5 33V45M76.5 34V44M77.5 33V45M78.5 33V45M79.5 33V45M80.5 33V45M81.5 34V44M82.5 34V44M83.5 33V45M84.5 34V44M85.5 34V44M86.5 33V45M87.5 33V45M88.5 34V44M89.5 34V44M90.5 34V44M91.5 33V45M92.5 33V45M93.5 34V44M94.5 34V44M95.5 34V44M96.5 34V44M97.5 34V44M98.5 34V44M99.5 33V45M100.5 34V44M101.5 33V45M102.5 33V45M103.5 33V45M104.5 33V45M105.5 34V44M106.5 34V44M107.5 33V45M108.5 33V45M109.5 33V45M110.5 34V44M111.5 33V45M112.5 34V44M113.5 34V44M114.5 34V44M115.5 34V44M116.5 33V45M117.5 33V45M118.5 33V45M119.5 33V45M120.5 33V45M121.5 33V45M122.5 34V44M123.5 33V45M124.5 33V45M125.5 33V45M126.5 33V45M127.5 34V44M128.5 34V44M129.5 33V45M130.5 34V44M131.5 34V44M132.5 34V44M133.5 33V45M134.5 33V45M135.5 34V44M136.5 35V43M137.5 33V45M138.5 33V45M139.5 33V45M140.5 34V44M141.5 34V44M142.5 34V44M143.5 33V45M144.5 34V44M145.5 33V45M146.5 34V44M147.5 34V44M148.5 33V45M149.5 33V45M150.5 33V45M151.5 33V45M152.5 33V45M153.5 33V45M154.5 34V44M155.5 34V44M156.5 34V44M157.5 34V44M158.5 33V45M159.5 34V44M160.5 33V45M161.5 34V44M162.5 34V44M163.5 33V45M164.5 34V44M165.5 33V45M166.5 33V45M167.5 33V45M168.5 33V45M169.5 33V45M170.5 34V44M171.5 33V45M172.5 33V45M173.5 33V45M174.5 34V44M175.5 34V44M176.5 33V45M177.5 34V44M178.5 34V44M179.5 34V44M180.5 35V43M181.5 34V44M182.5 34V44M183.5 33V45M184.5 34V44M185.5 34V44M186.5 34V44M187.5 33V45M188.5 34V44M189.5 33V45M190.5 34V44M191.5 34V44M192.5 33V45M193.5 33V45M194.5 33V45M195.5 33V45M196.5 34V44M197.5 34V44M198.5 33V45M199.5 33V45M200.5 34V44M201.5 33V45M202.5 33V45M203.5 33V45M204.5 33V45M205.5 34V44M206.5 33V45M207.5 33V45M208.5 33V45M209.5 34V44M210.5 33V45M211.5 33V45M212.5 34V44M213.5 33V45M214.5 34V44M215.5 33V45M216.5 33V45M217.5 34V44M218.5 34V44M219.5 33V45M220.5 33V45M221.5 34V44M222.5 34V44M223.5 34V44M224.5 34V44M225.5 34V44M226.5 34V44M227.5 33V45M228.5 33V45M229.5 34V44M230.5 33V45M231.5 33V45M232.5 33V45M233.5 33V45M234.5 35V43M235.5 35V43M236.5 34V44M237.5 33V45M238.5 34V44M239.5 34V44M240.5 33V45M241.5 34V44M242.5 34V44M243.5 34V44M244.5 34V44M245.5 34V44M246.5 34V44M247.5 34V44M248.5 34V44M249.5 33V45M250.5 34V44M251.5 33V45M252.5 34V44M253.5 34V44M254.5 34V44M255.5 33V45M256.5 34V44M257.5 34V44M258.5 36V42M259.5 34V44M260.5 33V45M261.5 34V44M262.5 33V45M263.5 34V44M264.5 34V44M265.5 33V45M266.5 34V44M267.5 34V44M268.5 33V45M269.5 34V44M270.5 33V45M271.5 34V44M272.5 34V44M273.5 33V45M274.5 34V44M275.5 33V45M276.5 33V45M277.5 33V45M278.5 34V44M279.5 33V45M280.5 33V45M281.5 34V44M282.5 33V45M283.5 33V45M284.5 33V45M285.5 34V44M286.5 33V45M287.5 33V45M288.5 34V44M289.5 34V44M290.5 33V45M291.5 34V44M292.5 34V44M293.5 33V45M294.5 33V45M295.5 33V45M296.5 34V44M297.5 33V45M298.5 33V45M299.5 33V45M300.5 34V44M301.5 34V44M302.5 34V44M303.5 33V45M304.5 34V44M305.5 34V44M306.5 33V45M307.5 33V45M308.5 34V44M309.5 34V44M310.5 33V45M311.5 33V45M312.5 34V44M313.5 33V45M314.5 33V45M315.5 34V44M316.5 33V45M317.5 34V44M318.5 34V44M319.5 33V45M320.5 33V45M321.5 34V44M322.5 34V44M323.5 34V44M324.5 33V45M325.5 33V45M326.5 34V44M327.5 34V44M328.5 33V45M329.5 34V44M330.5 34V44M331.5 33V45M332.5 33V45M333.5 33V45M334.5 33V45M335.5 33V45M336.5 33V45M337.5 33V45M338.5 34V44M339.5 32V46M340.5 34V44M341.5 33V45M342.5 33V45M343.5 32V46M344.5 32V46M345.5 33V45M346.5 33V45M347.5 33V45M348.5 32V46M349.5 32V46M350.5 33V45M351.5 32V46M352.5 33V45M353.5 33V45M354.5 33V45M355.5 32V46M356.5 33V45M357.5 32V46M358.5 32V46M359.5 33V45M360.5 32V46M361.5 32V46M362.5 33V45M363.5 33V45M364.5 33V45M365.5 33V45M366.5 33V45M367.5 34V44M368.5 32V46M369.5 33V45M370.5 34V44M371.5 33V45M372.5 32V46M373.5 33V45M374.5 32V46M375.5 33V45M376.5 33V45M377.5 34V44M378.5 33V45M379.5 32V46M380.5 32V46M381.5 33V45M382.5 33V45M383.5 32V46M384.5 32V46M385.5 32V46M386.5 34V44M387.5 34V44M388.5 32V46M389.5 33V45M390.5 33V45M391.5 33V45M392.5 33V45M393.5 33V45M394.5 32V46M395.5 32V46M396.5 33V45M397.5 33V45M398.5 33V45M399.5 33V45M400.5 33V45M401.5 32V46M402.5 33V45M403.5 33V45M404.5 32V46M405.5 32V46M406.5 33V45M407.5 32V46M408.5 33V45M409.5 32V46M410.5 33V45M411.5 33V45M412.5 33V45M413.5 32V46M414.5 33V45M415.5 33V45M416.5 32V46M417.5 32V46M418.5 33V45M419.5 32V46M420.5 32V46M421.5 33V45M422.5 32V46M423.5 32V46M424.5 33V45M425.5 28V50M426.5 29V49M427.5 31V47M428.5 29V49M429.5 30V48M430.5 31V47M431.5 30V48M432.5 30V48M433.5 29V49M434.5 29V49M435.5 30V48M436.5 31V47M437.5 32V46M438.5 31V47M439.5 33V45M440.5 32V46M441.5 33V45M442.5 32V46M443.5 32V46M444.5 32V46M445.5 33V45M446.5 34V44M447.5 34V44M448.5 33V45M449.5 34V44M450.5 34V44M451.5 33V45M452.5 34V44M453.5 34V44M454.5 34V44M455.5 33V45M456.5 33V45M457.5 34V44M458.5 33V45M459.5 33V45M460.5 34V44M461.5 34V44M462.5 34V44M463.5 34V44M464.5 33V45M465.5 34V44M466.5 33V45M467.5 33V45M468.5 33V45M469.5 33V45M470.5 33V45M471.5 33V45M472.5 33V45M473.5 33V45M474.5 33V45M475.5 33V45M476.5 33V45M477.5 33V45M478.5 34V44M479.5 33V45M480.5 33V45M481.5 33V45M482.5 33V45M483.5 34V44M484.5 34V44M485.5 34V44M486.5 34V44M487.5 34V44M488.5 33V45M489.5 33V45M490.5 34V44M491.5 34V44M492.5 34V44M493.5 34V44M494.5 34V44M495.5 33V45M496.5 34V44M497.5 33V45M498.5 33V45M499.5 35V43M500.5 36V42M501.5 37V41M502.5 38V40M503.5 37V41M504.5 33V45M505.5 33V45M506.5 33V45M507.5 32V46M508.5 33V45M509.5 32V46M510.5 33V45M511.5 34V44M512.5 33V45M513.5 33V45M514.5 33V45M515.5 33V45M516.5 33V45M517.5 33V45M518.5 32V46M519.5 34V44M520.5 33V45M521.5 33V45M522.5 32V46M523.5 32V46M524.5 34V44M525.5 33V45M526.5 33V45M527.5 32V46M528.5 32V46M529.5 32V46M530.5 33V45M531.5 33V45M532.5 33V45M533.5 33V45M534.5 34V44M535.5 33V45M536.5 34V44M537.5 33V45M538.5 34V44M539.5 34V44M540.5 34V44M541.5 35V43M542.5 35V43M543.5 34V44M544.5 34V44M545.5 34V44M546.5 35V43M547.5 35V43M548.5 34V44M549.5 34V44M550.5 35V43M551.5 34V44M552.5 35V43M553.5 36V42M554.5 35V43M555.5 35V43M556.5 34V44M557.5 34V44M558.5 35V43M559.5 35V43M560.5 34V44M561.5 35V43M562.5 35V43M563.5 34V44M564.5 34V44M565.5 35V43M566.5 34V44M567.5 34V44M568.5 36V42M569.5 36V42M570.5 35V43M571.5 35V43M572.5 35V43M573.5 34V44M574.5 35V43M575.5 36V42M576.5 34V44M577.5 34V44M578.5 34V44M579.5 34V44M580.5 34V44M581.5 33V45M582.5 33V45M583.5 33V45M584.5 33V45M585.5 33V45M586.5 32V46M587.5 33V45M588.5 32V46M589.5 34V44M590.5 34V44M591.5 32V46M592.5 34V44M593.5 34V44M594.5 34V44M595.5 33V45M596.5 32V46M597.5 33V45M598.5 34V44M599.5 33V45M600.5 32V46M601.5 32V46M602.5 33V45M603.5 33V45M604.5 33V45M605.5 32V46M606.5 33V45M607.5 33V45M608.5 34V44M609.5 33V45M610.5 33V45M611.5 33V45M612.5 33V45M613.5 33V45M614.5 32V46M615.5 33V45M616.5 33V45M617.5 33V45M618.5 33V45M619.5 33V45M620.5 33V45M621.5 33V45M622.5 32V46M623.5 34V44M624.5 32V46M625.5 33V45M626.5 33V45M627.5 33V45M628.5 33V45M629.5 33V45M630.5 33V45M631.5 33V45M632.5 32V46M633.5 33V45M634.5 32V46M635.5 34V44M636.5 33V45M637.5 33V45M638.5 34V44M639.5 32V46M640.5 33V45M641.5 33V45M642.5 32V46M643.5 32V46M644.5 32V46M645.5 32V46M646.5 33V45M647.5 33V45M648.5 34V44M649.5 33V45M650.5 32V46M651.5 32V46M652.5 33V45M653.5 33V45M654.5 32V46M655.5 33V45M656.5 32V46M657.5 33V45M658.5 33V45M659.5 34V44M660.5 34V44M661.5 35V43M662.5 36V42M663.5 37V41M664.5 38V40M665.5 38V40M666.5 38V40M667.5 38V40" stroke="#6464dc" stroke-width="1"/></svg>
<div style="left:106px;top:208px;width:677px;height:6px;background:#96958f;border-top:1px solid #3c3c3a;border-bottom:1px solid #3c3c3a;"></div>
<svg style="left:106px;top:214px" width="677" height="79" shape-rendering="crispEdges"><rect x="0" y="0" width="669" height="79" fill="#c0c0c0"/><rect x="669" y="0" width="8" height="79" fill="#d9d9d9"/><rect x="669" y="0" width="1" height="79" fill="#a6a6a6"/><rect x="54" y="0" width="105" height="79" fill="#9595ac"/><path d="M1.5 30V50M2.5 31V49M3.5 31V49M4.5 34V45M5.5 35V45M6.5 36V45M7.5 35V45M8.5 35V45M9.5 35V44M10.5 35V45M11.5 35V45M12.5 34V45M13.5 33V47M14.5 32V47M15.5 34V45M16.5 33V47M17.5 32V49M18.5 33V47M19.5 31V48M20.5 32V49M21.5 34V46M22.5 33V47M23.5 34V45M24.5 33V48M25.5 33V47M26.5 33V49M27.5 33V45M28.5 33V47M29.5 33V46M30.5 32V48M31.5 29V49M32.5 31V48M33.5 26V43M34.5 25V52M35.5 27V44M36.5 28V53M37.5 31V44M38.5 31V50M39.5 22V58M40.5 29V51M41.5 30V52M42.5 22V55M43.5 22V58M44.5 20V61M45.5 19V61M46.5 22V57M47.5 21V59M48.5 31V57M49.5 26V58M50.5 27V52M51.5 28V56M52.5 27V56M53.5 19V67M54.5 26V57M55.5 18V61M56.5 23V56M57.5 33V67M58.5 26V56M59.5 28V53M60.5 28V53M61.5 21V63M62.5 23V56M63.5 26V55M64.5 21V62M65.5 30V60M66.5 17V62M67.5 16V63M68.5 16V64M69.5 17V66M70.5 32V65M71.5 17V49M72.5 26V54M73.5 23V59M74.5 23V62M75.5 27V58M76.5 24V56M77.5 27V57M78.5 28V50M79.5 24V57M80.5 20V57M81.5 33V61M82.5 16V64M83.5 31V66M84.5 13V52M85.5 23V60M86.5 21V59M87.5 23V60M88.5 17V66M89.5 13V65M90.5 11V71M91.5 20V58M92.5 31V58M93.5 15V73M94.5 32V50M95.5 23V59M96.5 33V62M97.5 23V60M98.5 24V57M99.5 25V55M100.5 26V56M101.5 22V61M102.5 22V61M103.5 15V71M104.5 12V71M105.5 11V52M106.5 15V68M107.5 18V65M108.5 11V72M109.5 22V62M110.5 29V60M111.5 26V56M112.5 24V59M113.5 28V56M114.5 25V56M115.5 25V56M116.5 25V47M117.5 27V53M118.5 23V50M119.5 22V59M120.5 17V64M121.5 20V58M122.5 25V56M123.5 23V57M124.5 21V63M125.5 25V59M126.5 25V57M127.5 20V58M128.5 18V60M129.5 32V59M130.5 20V60M131.5 32V61M132.5 22V61M133.5 20V60M134.5 20V63M135.5 32V53M136.5 34V53M137.5 29V51M138.5 30V48M139.5 28V56M140.5 24V55M141.5 24V55M142.5 26V53M143.5 26V56M144.5 14V64M145.5 16V51M146.5 15V61M147.5 23V59M148.5 23V58M149.5 22V59M150.5 20V63M151.5 15V68M152.5 13V69M153.5 13V65M154.5 12V66M155.5 20V52M156.5 17V62M157.5 14V63M158.5 11V75M159.5 25V56M160.5 23V59M161.5 18V66M162.5 22V60M163.5 22V59M164.5 19V60M165.5 19V65M166.5 22V57M167.5 16V62M168.5 25V49M169.5 21V58M170.5 20V62M171.5 17V60M172.5 24V56M173.5 29V51M174.5 24V55M175.5 20V61M176.5 30V56M177.5 28V54M178.5 27V52M179.5 29V55M180.5 34V48M181.5 21V56M182.5 32V50M183.5 25V54M184.5 33V53M185.5 22V47M186.5 27V56M187.5 22V58M188.5 22V58M189.5 23V61M190.5 28V47M191.5 25V56M192.5 25V52M193.5 25V55M194.5 28V67M195.5 15V62M196.5 19V57M197.5 15V65M198.5 32V61M199.5 25V56M200.5 25V50M201.5 26V59M202.5 22V63M203.5 17V67M204.5 20V64M205.5 17V61M206.5 18V63M207.5 25V54M208.5 26V58M209.5 24V56M210.5 20V62M211.5 29V50M212.5 18V61M213.5 24V59M214.5 21V56M215.5 21V63M216.5 24V61M217.5 15V69M218.5 15V53M219.5 10V71M220.5 16V54M221.5 15V70M222.5 10V75M223.5 21V59M224.5 23V59M225.5 22V59M226.5 23V59M227.5 25V56M228.5 18V61M229.5 23V56M230.5 28V53M231.5 23V58M232.5 23V53M233.5 24V57M234.5 34V51M235.5 28V45M236.5 29V46M237.5 27V53M238.5 30V48M239.5 31V51M240.5 31V48M241.5 33V48M242.5 32V48M243.5 30V53M244.5 9V74M245.5 25V52M246.5 20V56M247.5 23V62M248.5 22V47M249.5 20V63M250.5 23V60M251.5 26V54M252.5 28V55M253.5 2V74M254.5 5V74M255.5 3V79M256.5 32V52M257.5 25V46M258.5 35V54M259.5 33V53M260.5 23V56M261.5 21V57M262.5 22V56M263.5 31V55M264.5 19V66M265.5 25V58M266.5 25V57M267.5 29V54M268.5 28V54M269.5 27V52M270.5 22V47M271.5 32V55M272.5 32V57M273.5 21V58M274.5 21V65M275.5 12V70M276.5 19V67M277.5 24V58M278.5 10V67M279.5 18V60M280.5 16V67M281.5 9V74M282.5 18V68M283.5 10V65M284.5 20V59M285.5 23V48M286.5 30V56M287.5 20V49M288.5 20V64M289.5 15V64M290.5 14V68M291.5 9V74M292.5 18V64M293.5 11V67M294.5 23V52M295.5 31V50M296.5 22V58M297.5 25V57M298.5 23V61M299.5 25V53M300.5 27V53M301.5 0V79M302.5 2V79M303.5 26V48M304.5 21V67M305.5 31V66M306.5 16V61M307.5 18V47M308.5 0V79M309.5 33V58M310.5 28V53M311.5 25V58M312.5 28V57M313.5 18V57M314.5 24V59M315.5 24V47M316.5 19V58M317.5 26V52M318.5 29V53M319.5 18V59M320.5 27V60M321.5 26V58M322.5 16V61M323.5 27V57M324.5 21V62M325.5 18V60M326.5 16V64M327.5 18V62M328.5 17V64M329.5 14V71M330.5 20V65M331.5 23V62M332.5 27V64M333.5 22V62M334.5 29V55M335.5 21V58M336.5 21V64M337.5 24V56M338.5 32V48M339.5 28V50M340.5 27V54M341.5 32V48M342.5 26V70M343.5 22V59M344.5 21V67M345.5 19V62M346.5 12V68M347.5 18V68M348.5 11V69M349.5 5V74M350.5 18V63M351.5 19V66M352.5 22V66M353.5 10V56M354.5 21V63M355.5 26V68M356.5 17V64M357.5 6V77M358.5 26V55M359.5 28V53M360.5 8V70M361.5 28V64M362.5 9V75M363.5 23V71M364.5 0V74M365.5 15V56M366.5 19V62M367.5 18V66M368.5 23V70M369.5 1V79M370.5 0V79M371.5 3V75M372.5 11V54M373.5 19V64M374.5 13V74M375.5 17V70M376.5 20V60M377.5 18V51M378.5 30V65M379.5 18V51M380.5 7V66M381.5 12V65M382.5 19V49M383.5 21V59M384.5 25V60M385.5 21V61M386.5 23V62M387.5 11V70M388.5 13V60M389.5 9V77M390.5 9V50M391.5 11V63M392.5 15V61M393.5 16V69M394.5 13V51M395.5 18V65M396.5 18V65M397.5 16V63M398.5 16V67M399.5 20V64M400.5 15V64M401.5 19V59M402.5 19V64M403.5 18V51M404.5 11V64M405.5 19V61M406.5 27V58M407.5 22V57M408.5 14V67M409.5 22V62M410.5 27V55M411.5 27V55M412.5 23V63M413.5 19V62M414.5 28V66M415.5 7V73M416.5 2V77M417.5 4V58M418.5 17V68M419.5 29V70M420.5 4V79M421.5 17V66M422.5 14V67M423.5 19V64M424.5 20V63M425.5 0V79M426.5 12V69M427.5 6V79M428.5 14V55M429.5 1V79M430.5 0V79M431.5 0V61M432.5 8V74M433.5 10V73M434.5 11V72M435.5 6V76M436.5 19V60M437.5 26V75M438.5 19V63M439.5 5V79M440.5 5V73M441.5 10V51M442.5 16V60M443.5 4V79M444.5 19V67M445.5 13V77M446.5 17V49M447.5 23V49M448.5 19V62M449.5 27V53M450.5 17V65M451.5 22V61M452.5 16V64M453.5 32V60M454.5 17V60M455.5 16V50M456.5 23V56M457.5 17V64M458.5 18V65M459.5 22V65M460.5 18V69M461.5 22V63M462.5 23V60M463.5 29V70M464.5 28V67M465.5 14V53M466.5 20V66M467.5 18V62M468.5 18V62M469.5 22V57M470.5 12V72M471.5 9V67M472.5 8V67M473.5 14V52M474.5 22V64M475.5 21V50M476.5 28V58M477.5 22V65M478.5 25V54M479.5 20V64M480.5 24V54M481.5 24V60M482.5 20V66M483.5 21V61M484.5 23V61M485.5 32V54M486.5 15V66M487.5 20V64M488.5 19V65M489.5 25V58M490.5 15V63M491.5 13V69M492.5 29V67M493.5 10V64M494.5 17V62M495.5 18V54M496.5 31V58M497.5 20V61M498.5 30V62M499.5 26V55M500.5 30V51M501.5 33V47M502.5 37V42M503.5 37V42M504.5 12V73M505.5 21V64M506.5 11V73M507.5 19V65M508.5 21V64M509.5 30V67M510.5 21V62M511.5 24V63M512.5 13V64M513.5 8V75M514.5 12V77M515.5 11V76M516.5 13V67M517.5 16V68M518.5 14V68M519.5 15V68M520.5 12V72M521.5 14V64M522.5 16V71M523.5 19V60M524.5 14V70M525.5 19V66M526.5 18V64M527.5 15V70M528.5 12V66M529.5 19V64M530.5 22V62M531.5 23V51M532.5 25V48M533.5 24V48M534.5 25V59M535.5 19V60M536.5 21V59M537.5 26V52M538.5 22V60M539.5 19V64M540.5 21V62M541.5 31V52M542.5 17V61M543.5 17V68M544.5 17V68M545.5 31V49M546.5 30V48M547.5 31V46M548.5 25V55M549.5 29V51M550.5 29V53M551.5 31V47M552.5 33V53M553.5 35V56M554.5 30V50M555.5 23V54M556.5 33V55M557.5 23V55M558.5 22V55M559.5 30V49M560.5 26V58M561.5 24V55M562.5 27V50M563.5 28V50M564.5 28V52M565.5 30V44M566.5 28V55M567.5 26V51M568.5 31V44M569.5 35V56M570.5 29V49M571.5 31V51M572.5 34V51M573.5 29V48M574.5 27V57M575.5 35V53M576.5 24V57M577.5 33V56M578.5 23V55M579.5 24V58M580.5 6V69M581.5 8V66M582.5 12V65M583.5 20V61M584.5 32V50M585.5 27V66M586.5 17V65M587.5 26V53M588.5 23V55M589.5 22V56M590.5 22V46M591.5 29V53M592.5 21V46M593.5 28V48M594.5 23V57M595.5 9V71M596.5 8V71M597.5 23V61M598.5 18V60M599.5 9V77M600.5 9V71M601.5 29V52M602.5 23V57M603.5 18V62M604.5 29V52M605.5 29V52M606.5 27V52M607.5 26V61M608.5 28V65M609.5 27V77M610.5 16V54M611.5 9V74M612.5 9V67M613.5 3V79M614.5 20V68M615.5 31V73M616.5 8V72M617.5 28V65M618.5 18V66M619.5 21V62M620.5 18V62M621.5 17V69M622.5 21V57M623.5 20V56M624.5 0V79M625.5 21V62M626.5 23V51M627.5 32V63M628.5 15V59M629.5 25V57M630.5 28V50M631.5 24V55M632.5 18V67M633.5 19V65M634.5 20V63M635.5 13V48M636.5 11V66M637.5 19V66M638.5 25V49M639.5 15V67M640.5 21V49M641.5 26V59M642.5 21V58M643.5 16V49M644.5 22V50M645.5 22V61M646.5 17V65M647.5 12V53M648.5 16V62M649.5 11V66M650.5 19V65M651.5 20V60M652.5 14V67M653.5 12V67M654.5 10V79M655.5 0V79M656.5 0V79M657.5 21V60M658.5 27V55M659.5 29V50M660.5 32V48M661.5 34V46M662.5 36V44M663.5 37V42M664.5 37V42M665.5 38V41M666.5 38V41M667.5 39V40M668.5 39V40" stroke="#3232c8" stroke-width="1"/><path d="M1.5 37V42M2.5 37V42M3.5 37V42M4.5 37V42M5.5 37V42M6.5 37V42M7.5 37V42M8.5 37V42M9.5 37V42M10.5 37V42M11.5 37V42M12.5 37V42M13.5 37V42M14.5 37V42M15.5 37V42M16.5 37V42M17.5 37V42M18.5 37V42M19.5 37V42M20.5 37V42M21.5 36V43M22.5 37V42M23.5 36V43M24.5 36V43M25.5 37V42M26.5 36V43M27.5 36V43M28.5 36V43M29.5 36V43M30.5 36V43M31.5 36V43M32.5 36V43M33.5 37V42M34.5 36V43M35.5 36V43M36.5 36V43M37.5 36V43M38.5 36V43M39.5 35V44M40.5 34V45M41.5 34V45M42.5 34V45M43.5 33V46M44.5 33V46M45.5 34V45M46.5 34V45M47.5 33V46M48.5 33V46M49.5 34V45M50.5 34V45M51.5 34V45M52.5 34V45M53.5 34V45M54.5 33V46M55.5 34V45M56.5 34V45M57.5 35V44M58.5 34V45M59.5 34V45M60.5 34V45M61.5 33V46M62.5 35V44M63.5 34V45M64.5 34V45M65.5 33V46M66.5 34V45M67.5 34V45M68.5 33V46M69.5 34V45M70.5 34V45M71.5 35V44M72.5 33V46M73.5 33V46M74.5 34V45M75.5 34V45M76.5 34V45M77.5 33V46M78.5 34V45M79.5 33V46M80.5 34V45M81.5 34V45M82.5 34V45M83.5 33V46M84.5 34V45M85.5 34V45M86.5 34V45M87.5 34V45M88.5 34V45M89.5 34V45M90.5 34V45M91.5 33V46M92.5 33V46M93.5 34V45M94.5 34V45M95.5 34V45M96.5 34V45M97.5 34V45M98.5 35V44M99.5 33V46M100.5 35V44M101.5 34V45M102.5 33V46M103.5 33V46M104.5 33V46M105.5 34V45M106.5 34V45M107.5 34V45M108.5 33V46M109.5 33V46M110.5 34V45M111.5 33V46M112.5 35V44M113.5 34V45M114.5 35V44M115.5 34V45M116.5 34V45M117.5 33V46M118.5 33V46M119.5 33V46M120.5 34V45M121.5 34V45M122.5 34V45M123.5 34V45M124.5 33V46M125.5 33V46M126.5 34V45M127.5 34V45M128.5 35V44M129.5 34V45M130.5 34V45M131.5 34V45M132.5 34V45M133.5 34V45M134.5 33V46M135.5 34V45M136.5 35V44M137.5 33V46M138.5 33V46M139.5 33V46M140.5 34V45M141.5 34V45M142.5 34V45M143.5 34V45M144.5 35V44M145.5 34V45M146.5 34V45M147.5 34V45M148.5 33V46M149.5 33V46M150.5 33V46M151.5 33V46M152.5 34V45M153.5 34V45M154.5 34V45M155.5 35V44M156.5 35V44M157.5 34V45M158.5 34V45M159.5 34V45M160.5 33V46M161.5 34V45M162.5 35V44M163.5 34V45M164.5 35V44M165.5 34V45M166.5 33V46M167.5 34V45M168.5 33V46M169.5 34V45M170.5 34V45M171.5 33V46M172.5 33V46M173.5 34V45M174.5 34V45M175.5 35V44M176.5 34V45M177.5 34V45M178.5 34V45M179.5 34V45M180.5 35V44M181.5 34V45M182.5 34V45M183.5 34V45M184.5 34V45M185.5 34V45M186.5 34V45M187.5 34V45M188.5 34V45M189.5 34V45M190.5 34V45M191.5 34V45M192.5 33V46M193.5 34V45M194.5 34V45M195.5 34V45M196.5 35V44M197.5 34V45M198.5 34V45M199.5 34V45M200.5 34V45M201.5 34V45M202.5 33V46M203.5 33V46M204.5 34V45M205.5 35V44M206.5 33V46M207.5 34V45M208.5 34V45M209.5 35V44M210.5 34V45M211.5 33V46M212.5 34V45M213.5 33V46M214.5 35V44M215.5 33V46M216.5 33V46M217.5 34V45M218.5 34V45M219.5 33V46M220.5 33V46M221.5 34V45M222.5 34V45M223.5 34V45M224.5 34V45M225.5 35V44M226.5 34V45M227.5 34V45M228.5 34V45M229.5 34V45M230.5 33V46M231.5 34V45M232.5 34V45M233.5 33V46M234.5 35V44M235.5 35V44M236.5 35V44M237.5 33V46M238.5 34V45M239.5 34V45M240.5 33V46M241.5 34V45M242.5 34V45M243.5 35V44M244.5 34V45M245.5 35V44M246.5 34V45M247.5 34V45M248.5 34V45M249.5 34V45M250.5 34V45M251.5 34V45M252.5 34V45M253.5 34V45M254.5 35V44M255.5 33V46M256.5 34V45M257.5 35V44M258.5 36V43M259.5 34V45M260.5 33V46M261.5 34V45M262.5 33V46M263.5 35V44M264.5 34V45M265.5 33V46M266.5 34V45M267.5 34V45M268.5 34V45M269.5 34V45M270.5 34V45M271.5 34V45M272.5 34V45M273.5 33V46M274.5 34V45M275.5 34V45M276.5 33V46M277.5 34V45M278.5 34V45M279.5 34V45M280.5 34V45M281.5 34V45M282.5 33V46M283.5 34V45M284.5 33V46M285.5 34V45M286.5 33V46M287.5 33V46M288.5 34V45M289.5 34V45M290.5 34V45M291.5 34V45M292.5 35V44M293.5 33V46M294.5 33V46M295.5 33V46M296.5 34V45M297.5 34V45M298.5 34V45M299.5 33V46M300.5 35V44M301.5 34V45M302.5 34V45M303.5 33V46M304.5 34V45M305.5 34V45M306.5 33V46M307.5 34V45M308.5 34V45M309.5 35V44M310.5 33V46M311.5 33V46M312.5 34V45M313.5 34V45M314.5 33V46M315.5 34V45M316.5 33V46M317.5 34V45M318.5 34V45M319.5 33V46M320.5 34V45M321.5 34V45M322.5 34V45M323.5 34V45M324.5 33V46M325.5 33V46M326.5 34V45M327.5 35V44M328.5 33V46M329.5 34V45M330.5 34V45M331.5 34V45M332.5 33V46M333.5 34V45M334.5 34V45M335.5 33V46M336.5 33V46M337.5 34V45M338.5 34V45M339.5 33V46M340.5 34V45M341.5 34V45M342.5 34V45M343.5 32V47M344.5 33V46M345.5 34V45M346.5 33V46M347.5 34V45M348.5 32V47M349.5 33V46M350.5 34V45M351.5 33V46M352.5 34V45M353.5 33V46M354.5 33V46M355.5 32V47M356.5 34V45M357.5 32V47M358.5 32V47M359.5 33V46M360.5 32V47M361.5 33V46M362.5 34V45M363.5 33V46M364.5 33V46M365.5 34V45M366.5 33V46M367.5 34V45M368.5 32V47M369.5 33V46M370.5 34V45M371.5 34V45M372.5 33V46M373.5 34V45M374.5 32V47M375.5 33V46M376.5 33V46M377.5 34V45M378.5 34V45M379.5 33V46M380.5 33V46M381.5 33V46M382.5 33V46M383.5 33V46M384.5 33V46M385.5 32V47M386.5 34V45M387.5 34V45M388.5 33V46M389.5 34V45M390.5 33V46M391.5 34V45M392.5 34V45M393.5 34V45M394.5 32V47M395.5 32V47M396.5 34V45M397.5 33V46M398.5 33V46M399.5 33V46M400.5 34V45M401.5 32V47M402.5 33V46M403.5 34V45M404.5 33V46M405.5 32V47M406.5 34V45M407.5 33V46M408.5 33V46M409.5 33V46M410.5 33V46M411.5 33V46M412.5 34V45M413.5 33V46M414.5 33V46M415.5 33V46M416.5 33V46M417.5 32V47M418.5 34V45M419.5 33V46M420.5 32V47M421.5 34V45M422.5 33V46M423.5 33V46M424.5 33V46M425.5 29V50M426.5 30V49M427.5 31V48M428.5 29V50M429.5 30V49M430.5 31V48M431.5 30V49M432.5 30V49M433.5 29V50M434.5 29V50M435.5 30V49M436.5 32V47M437.5 32V47M438.5 32V47M439.5 33V46M440.5 32V47M441.5 33V46M442.5 32V47M443.5 33V46M444.5 33V46M445.5 33V46M446.5 34V45M447.5 34V45M448.5 33V46M449.5 35V44M450.5 34V45M451.5 33V46M452.5 34V45M453.5 34V45M454.5 35V44M455.5 34V45M456.5 34V45M457.5 34V45M458.5 34V45M459.5 33V46M460.5 34V45M461.5 34V45M462.5 34V45M463.5 34V45M464.5 34V45M465.5 34V45M466.5 33V46M467.5 34V45M468.5 33V46M469.5 33V46M470.5 33V46M471.5 33V46M472.5 34V45M473.5 33V46M474.5 33V46M475.5 33V46M476.5 33V46M477.5 34V45M478.5 34V45M479.5 34V45M480.5 34V45M481.5 33V46M482.5 33V46M483.5 35V44M484.5 34V45M485.5 35V44M486.5 34V45M487.5 35V44M488.5 34V45M489.5 33V46M490.5 35V44M491.5 34V45M492.5 34V45M493.5 35V44M494.5 34V45M495.5 34V45M496.5 34V45M497.5 33V46M498.5 33V46M499.5 35V44M500.5 36V43M501.5 37V42M502.5 38V41M503.5 38V41M504.5 33V46M505.5 33V46M506.5 33V46M507.5 32V47M508.5 34V45M509.5 33V46M510.5 34V45M511.5 34V45M512.5 33V46M513.5 34V45M514.5 34V45M515.5 34V45M516.5 33V46M517.5 33V46M518.5 32V47M519.5 34V45M520.5 34V45M521.5 34V45M522.5 32V47M523.5 33V46M524.5 34V45M525.5 33V46M526.5 34V45M527.5 32V47M528.5 32V47M529.5 33V46M530.5 34V45M531.5 34V45M532.5 33V46M533.5 33V46M534.5 34V45M535.5 34V45M536.5 34V45M537.5 34V45M538.5 35V44M539.5 34V45M540.5 35V44M541.5 35V44M542.5 36V43M543.5 35V44M544.5 35V44M545.5 35V44M546.5 35V44M547.5 35V44M548.5 35V44M549.5 35V44M550.5 35V44M551.5 35V44M552.5 35V44M553.5 36V43M554.5 36V43M555.5 35V44M556.5 35V44M557.5 35V44M558.5 35V44M559.5 35V44M560.5 35V44M561.5 36V43M562.5 36V43M563.5 35V44M564.5 35V44M565.5 36V43M566.5 35V44M567.5 35V44M568.5 36V43M569.5 36V43M570.5 35V44M571.5 35V44M572.5 35V44M573.5 34V45M574.5 35V44M575.5 36V43M576.5 35V44M577.5 35V44M578.5 35V44M579.5 34V45M580.5 34V45M581.5 33V46M582.5 33V46M583.5 33V46M584.5 34V45M585.5 33V46M586.5 33V46M587.5 34V45M588.5 33V46M589.5 34V45M590.5 35V44M591.5 33V46M592.5 34V45M593.5 34V45M594.5 34V45M595.5 33V46M596.5 33V46M597.5 34V45M598.5 34V45M599.5 34V45M600.5 33V46M601.5 32V47M602.5 33V46M603.5 34V45M604.5 33V46M605.5 33V46M606.5 33V46M607.5 33V46M608.5 34V45M609.5 34V45M610.5 34V45M611.5 34V45M612.5 33V46M613.5 34V45M614.5 33V46M615.5 33V46M616.5 33V46M617.5 33V46M618.5 33V46M619.5 34V45M620.5 34V45M621.5 33V46M622.5 33V46M623.5 34V45M624.5 33V46M625.5 34V45M626.5 34V45M627.5 34V45M628.5 33V46M629.5 34V45M630.5 33V46M631.5 33V46M632.5 32V47M633.5 33V46M634.5 33V46M635.5 34V45M636.5 33V46M637.5 34V45M638.5 34V45M639.5 33V46M640.5 34V45M641.5 33V46M642.5 33V46M643.5 32V47M644.5 32V47M645.5 33V46M646.5 33V46M647.5 33V46M648.5 34V45M649.5 34V45M650.5 33V46M651.5 33V46M652.5 34V45M653.5 33V46M654.5 33V46M655.5 34V45M656.5 33V46M657.5 33V46M658.5 33V46M659.5 35V44M660.5 34V45M661.5 36V43M662.5 37V42M663.5 37V42M664.5 38V41M665.5 38V41M666.5 39V40M667.5 39V40M668.5 39V40" stroke="#6464dc" stroke-width="1"/></svg>
<span class="t vrb" style="left:69.3px;width:32px;text-align:right;top:131px;">1,0</span>
<span class="t vr" style="left:69.6px;width:32px;text-align:right;top:145px;">0,5</span>
<div style="left:105px;top:149px;width:2px;height:1px;background:#333;"></div>
<span class="t vrb" style="left:69.3px;width:32px;text-align:right;top:164px;">0,0</span>
<div style="left:103px;top:168px;width:4px;height:1px;background:#111;"></div>
<span class="t vr" style="left:69.6px;width:32px;text-align:right;top:184px;">-0,5</span>
<div style="left:105px;top:188px;width:2px;height:1px;background:#333;"></div>
<span class="t vrb" style="left:69.3px;width:32px;text-align:right;top:198px;">-1,0</span>
<span class="t vrb" style="left:69.3px;width:32px;text-align:right;top:215px;">1,0</span>
<span class="t vr" style="left:69.6px;width:32px;text-align:right;top:229px;">0,5</span>
<div style="left:105px;top:233px;width:2px;height:1px;background:#333;"></div>
<span class="t vrb" style="left:69.3px;width:32px;text-align:right;top:248px;">0,0</span>
<div style="left:103px;top:252px;width:4px;height:1px;background:#111;"></div>
<span class="t vr" style="left:69.6px;width:32px;text-align:right;top:268px;">-0,5</span>
<div style="left:105px;top:272px;width:2px;height:1px;background:#333;"></div>
<span class="t vrb" style="left:69.3px;width:32px;text-align:right;top:283px;">-1,0</span>
<div style="left:3px;top:294px;width:782px;height:1px;background:#5e5e3c;"></div>
<div style="left:3px;top:298px;width:781px;height:165px;background:#000;"></div>
<div style="left:4px;top:299px;width:74px;height:163px;background:#dddbd6;"></div>
<div style="left:78px;top:299px;width:1px;height:163px;background:#55555a;"></div>
<div style="left:79px;top:299px;width:27px;height:163px;background:#e4e2dd;"></div>
<div style="left:79px;top:377px;width:27px;height:1px;background:#8c8c96;"></div>
<div style="left:79px;top:383px;width:27px;height:1px;background:#fff;"></div>
<div style="left:4px;top:299px;width:12px;height:12px;border:1px solid;border-color:#efeeea #a9a7a1 #a9a7a1 #efeeea;"></div>
<div style="left:17px;top:299px;width:61px;height:12px;border:1px solid;border-color:#efeeea #a9a7a1 #a9a7a1 #efeeea;"></div>
<div style="left:4px;top:310px;width:74px;height:1px;background:#3a3a3e;"></div>
<div style="left:16px;top:299px;width:1px;height:11px;background:#3a3a3e;"></div>
<svg style="left:6px;top:301px" width="8" height="8"><path d="M1 1L7 7M7 1L1 7" stroke="#111" stroke-width="1.3"/></svg>
<span class="t tl" style="left:18px;top:301px;">Three unfair</span>
<svg style="left:65px;top:303px" width="11" height="6"><path d="M0.500 0.500H10.500L5.500 5.500Z" fill="#111"/></svg>
<div style="left:4px;top:311px;width:74px;height:26px;border:1px solid;border-color:#efeeea #a9a7a1 #a9a7a1 #efeeea;"></div>
<span class="t tl" style="left:7px;top:314px;letter-spacing:0.1px;">Стерео, 44100Hz</span>
<span class="t tl" style="left:7px;top:326px;">16-bit PCM</span>
<div style="left:4px;top:337px;width:74px;height:1px;background:#3a3a3e;"></div>
<div style="left:4px;top:338px;width:37px;height:11px;border:1px solid;border-color:#efeeea #a9a7a1 #a9a7a1 #efeeea;"></div>
<div style="left:42px;top:338px;width:36px;height:11px;border:1px solid;border-color:#efeeea #a9a7a1 #a9a7a1 #efeeea;"></div>
<div style="left:41px;top:338px;width:1px;height:11px;background:#3a3a3e;"></div>
<span class="t tl" style="left:4px;width:37px;text-align:center;top:340px;">Тихо</span>
<span class="t tl" style="left:42px;width:36px;text-align:center;top:340px;">Соло</span>
<div style="left:4px;top:349px;width:74px;height:1px;background:#3a3a3e;"></div>
<div style="left:4px;top:350px;width:74px;height:99px;border:1px solid;border-color:#efeeea #a9a7a1 #a9a7a1 #efeeea;"></div>
<div style="left:12px;top:366px;width:60px;height:1px;background:#f3f3ea;"></div>
<div style="left:12px;top:361px;width:1px;height:5px;background:#a9a9b8;"></div>
<div style="left:13px;top:361px;width:1px;height:5px;background:#f1f1e4;"></div>
<div style="left:18px;top:363px;width:1px;height:3px;background:#a9a9b8;"></div>
<div style="left:19px;top:363px;width:1px;height:3px;background:#f1f1e4;"></div>
<div style="left:23px;top:363px;width:1px;height:3px;background:#a9a9b8;"></div>
<div style="left:24px;top:363px;width:1px;height:3px;background:#f1f1e4;"></div>
<div style="left:29px;top:363px;width:1px;height:3px;background:#a9a9b8;"></div>
<div style="left:30px;top:363px;width:1px;height:3px;background:#f1f1e4;"></div>
<div style="left:34px;top:363px;width:1px;height:3px;background:#a9a9b8;"></div>
<div style="left:35px;top:363px;width:1px;height:3px;background:#f1f1e4;"></div>
<div style="left:40px;top:363px;width:1px;height:3px;background:#a9a9b8;"></div>
<div style="left:41px;top:363px;width:1px;height:3px;background:#f1f1e4;"></div>
<div style="left:46px;top:363px;width:1px;height:3px;background:#a9a9b8;"></div>
<div style="left:47px;top:363px;width:1px;height:3px;background:#f1f1e4;"></div>
<div style="left:51px;top:363px;width:1px;height:3px;background:#a9a9b8;"></div>
<div style="left:52px;top:363px;width:1px;height:3px;background:#f1f1e4;"></div>
<div style="left:57px;top:363px;width:1px;height:3px;background:#a9a9b8;"></div>
<div style="left:58px;top:363px;width:1px;height:3px;background:#f1f1e4;"></div>
<div style="left:62px;top:363px;width:1px;height:3px;background:#a9a9b8;"></div>
<div style="left:63px;top:363px;width:1px;height:3px;background:#f1f1e4;"></div>
<div style="left:68px;top:361px;width:1px;height:5px;background:#a9a9b8;"></div>
<div style="left:69px;top:361px;width:1px;height:5px;background:#f1f1e4;"></div>
<svg style="left:35px;top:359px" width="11" height="13"><path d="M2 0.600H9Q10.400 0.600 10.400 2V7.200L5.500 12.200L0.600 7.200V2Q0.600 0.600 2 0.600Z" fill="#cbcfee" stroke="#4c4f63" stroke-width="1"/><path d="M4 4H7M4 6H7" stroke="#f4f5fc" stroke-width="0.9"/></svg>
<div style="left:12px;top:356.5px;width:4.500px;height:1.500px;background:#2a2a2a;"></div>
<div style="left:65px;top:356.8px;width:5px;height:1.400px;background:#222;"></div><div style="left:66.8px;top:355px;width:1.400px;height:5px;background:#222;"></div>
<span class="t tl" style="left:12px;top:377px;font-size:8px;">Л</span><span class="t tl" style="left:64.500px;top:377px;font-size:8px;">П</span>
<div style="left:12px;top:390px;width:60px;height:1px;background:#f3f3ea;"></div>
<div style="left:12px;top:385px;width:1px;height:5px;background:#a9a9b8;"></div>
<div style="left:13px;top:385px;width:1px;height:5px;background:#f1f1e4;"></div>
<div style="left:18px;top:387px;width:1px;height:3px;background:#a9a9b8;"></div>
<div style="left:19px;top:387px;width:1px;height:3px;background:#f1f1e4;"></div>
<div style="left:23px;top:387px;width:1px;height:3px;background:#a9a9b8;"></div>
<div style="left:24px;top:387px;width:1px;height:3px;background:#f1f1e4;"></div>
<div style="left:29px;top:387px;width:1px;height:3px;background:#a9a9b8;"></div>
<div style="left:30px;top:387px;width:1px;height:3px;background:#f1f1e4;"></div>
<div style="left:34px;top:387px;width:1px;height:3px;background:#a9a9b8;"></div>
<div style="left:35px;top:387px;width:1px;height:3px;background:#f1f1e4;"></div>
<div style="left:40px;top:387px;width:1px;height:3px;background:#a9a9b8;"></div>
<div style="left:41px;top:387px;width:1px;height:3px;background:#f1f1e4;"></div>
<div style="left:46px;top:387px;width:1px;height:3px;background:#a9a9b8;"></div>
<div style="left:47px;top:387px;width:1px;height:3px;background:#f1f1e4;"></div>
<div style="left:51px;top:387px;width:1px;height:3px;background:#a9a9b8;"></div>
<div style="left:52px;top:387px;width:1px;height:3px;background:#f1f1e4;"></div>
<div style="left:57px;top:387px;width:1px;height:3px;background:#a9a9b8;"></div>
<div style="left:58px;top:387px;width:1px;height:3px;background:#f1f1e4;"></div>
<div style="left:62px;top:387px;width:1px;height:3px;background:#a9a9b8;"></div>
<div style="left:63px;top:387px;width:1px;height:3px;background:#f1f1e4;"></div>
<div style="left:68px;top:385px;width:1px;height:5px;background:#a9a9b8;"></div>
<div style="left:69px;top:385px;width:1px;height:5px;background:#f1f1e4;"></div>
<svg style="left:35px;top:383px" width="11" height="13"><path d="M2 0.600H9Q10.400 0.600 10.400 2V7.200L5.500 12.200L0.600 7.200V2Q0.600 0.600 2 0.600Z" fill="#cbcfee" stroke="#4c4f63" stroke-width="1"/><path d="M4 4H7M4 6H7" stroke="#f4f5fc" stroke-width="0.9"/></svg>
<div style="left:4px;top:449px;width:74px;height:1px;background:#3a3a3e;"></div>
<div style="left:4px;top:450px;width:74px;height:12px;border:1px solid;border-color:#efeeea #a9a7a1 #a9a7a1 #efeeea;"></div>
<svg style="left:37px;top:452px" width="9" height="7"><path d="M4.500 1L8 6H1Z" fill="#a3a19c"/></svg>
<svg style="left:106px;top:299px" width="677" height="78" shape-rendering="crispEdges"><rect x="0" y="0" width="384" height="78" fill="#c0c0c0"/><rect x="384" y="0" width="293" height="78" fill="#d9d9d9"/><rect x="384" y="0" width="1" height="78" fill="#a6a6a6"/><path d="M1.5 28V55M2.5 21V59M3.5 30V51M4.5 28V51M5.5 25V48M6.5 30V52M7.5 23V48M8.5 27V56M9.5 23V47M10.5 19V56M11.5 25V55M12.5 28V50M13.5 26V55M14.5 25V56M15.5 20V45M16.5 20V61M17.5 19V62M18.5 22V59M19.5 19V57M20.5 23V58M21.5 24V54M22.5 20V61M23.5 21V60M24.5 18V63M25.5 17V59M26.5 32V54M27.5 19V60M28.5 34V58M29.5 33V56M30.5 24V53M31.5 22V59M32.5 19V47M33.5 27V55M34.5 30V50M35.5 29V57M36.5 9V78M37.5 11V70M38.5 30V52M39.5 33V53M40.5 26V56M41.5 25V45M42.5 29V52M43.5 30V50M44.5 31V49M45.5 25V56M46.5 34V44M47.5 33V45M48.5 33V46M49.5 35V43M50.5 35V43M51.5 34V45M52.5 34V48M53.5 30V50M54.5 32V49M55.5 30V48M56.5 30V49M57.5 35V46M58.5 35V47M59.5 36V45M60.5 27V51M61.5 29V48M62.5 32V49M63.5 34V46M64.5 29V48M65.5 29V50M66.5 31V42M67.5 29V43M68.5 29V45M69.5 28V51M70.5 35V50M71.5 29V49M72.5 25V56M73.5 25V58M74.5 28V43M75.5 27V53M76.5 24V54M77.5 27V55M78.5 32V48M79.5 34V44M80.5 36V45M81.5 30V48M82.5 31V49M83.5 33V46M84.5 33V44M85.5 31V48M86.5 35V45M87.5 35V43M88.5 36V43M89.5 34V45M90.5 31V46M91.5 19V43M92.5 23V53M93.5 29V48M94.5 31V52M95.5 31V46M96.5 34V51M97.5 30V51M98.5 26V52M99.5 28V44M100.5 28V44M101.5 31V52M102.5 33V46M103.5 35V46M104.5 35V50M105.5 33V46M106.5 27V49M107.5 28V53M108.5 24V45M109.5 23V59M110.5 25V43M111.5 21V63M112.5 35V48M113.5 31V47M114.5 28V50M115.5 30V48M116.5 30V47M117.5 31V50M118.5 28V51M119.5 26V53M120.5 26V51M121.5 24V56M122.5 29V53M123.5 31V46M124.5 27V54M125.5 29V51M126.5 35V50M127.5 34V43M128.5 34V46M129.5 36V47M130.5 26V54M131.5 27V55M132.5 31V50M133.5 34V45M134.5 19V63M135.5 31V48M136.5 33V48M137.5 33V46M138.5 29V50M139.5 35V50M140.5 31V49M141.5 19V61M142.5 32V48M143.5 30V43M144.5 35V47M145.5 31V49M146.5 31V49M147.5 33V45M148.5 32V43M149.5 34V45M150.5 33V48M151.5 19V59M152.5 18V63M153.5 26V64M154.5 28V50M155.5 36V52M156.5 32V47M157.5 28V53M158.5 28V51M159.5 34V45M160.5 28V53M161.5 30V51M162.5 32V47M163.5 33V45M164.5 30V48M165.5 31V51M166.5 28V50M167.5 32V47M168.5 29V49M169.5 34V44M170.5 31V43M171.5 32V47M172.5 36V46M173.5 30V49M174.5 26V49M175.5 28V49M176.5 25V56M177.5 23V53M178.5 36V48M179.5 27V53M180.5 31V46M181.5 30V52M182.5 27V51M183.5 32V49M184.5 31V48M185.5 33V47M186.5 29V43M187.5 32V49M188.5 33V46M189.5 27V48M190.5 26V53M191.5 24V47M192.5 26V54M193.5 29V50M194.5 26V55M195.5 28V49M196.5 31V49M197.5 34V44M198.5 28V48M199.5 36V49M200.5 33V49M201.5 28V49M202.5 32V50M203.5 29V47M204.5 27V50M205.5 32V42M206.5 30V50M207.5 31V50M208.5 37V47M209.5 28V50M210.5 35V42M211.5 30V47M212.5 30V49M213.5 28V52M214.5 34V47M215.5 32V42M216.5 31V50M217.5 36V41M218.5 35V41M219.5 23V59M220.5 29V56M221.5 22V54M222.5 26V55M223.5 30V51M224.5 25V56M225.5 29V51M226.5 31V43M227.5 29V50M228.5 35V50M229.5 30V50M230.5 26V50M231.5 27V53M232.5 33V44M233.5 30V49M234.5 33V49M235.5 36V46M236.5 36V47M237.5 27V51M238.5 29V48M239.5 26V55M240.5 29V49M241.5 26V51M242.5 27V49M243.5 33V46M244.5 30V52M245.5 29V50M246.5 25V43M247.5 31V49M248.5 33V45M249.5 26V52M250.5 29V47M251.5 26V52M252.5 29V52M253.5 35V43M254.5 25V52M255.5 24V51M256.5 35V54M257.5 27V42M258.5 34V46M259.5 34V43M260.5 31V49M261.5 31V48M262.5 17V63M263.5 29V48M264.5 33V47M265.5 27V50M266.5 32V47M267.5 30V52M268.5 31V44M269.5 18V62M270.5 32V45M271.5 35V48M272.5 26V53M273.5 25V55M274.5 27V51M275.5 28V53M276.5 31V46M277.5 16V63M278.5 22V58M279.5 35V44M280.5 31V52M281.5 25V53M282.5 30V52M283.5 36V43M284.5 23V51M285.5 18V60M286.5 27V50M287.5 33V45M288.5 36V46M289.5 34V45M290.5 28V50M291.5 36V44M292.5 23V57M293.5 31V51M294.5 30V47M295.5 31V51M296.5 29V50M297.5 32V43M298.5 26V52M299.5 32V45M300.5 36V48M301.5 31V51M302.5 35V49M303.5 30V43M304.5 32V49M305.5 31V50M306.5 27V51M307.5 25V52M308.5 25V56M309.5 32V48M310.5 34V45M311.5 27V43M312.5 28V48M313.5 28V51M314.5 36V55M315.5 31V49M316.5 26V52M317.5 25V53M318.5 26V54M319.5 25V54M320.5 27V49M321.5 26V54M322.5 33V48M323.5 36V44M324.5 26V55M325.5 36V45M326.5 34V45M327.5 26V54M328.5 26V51M329.5 25V54M330.5 22V59M331.5 18V60M332.5 24V57M333.5 28V53M334.5 23V60M335.5 21V57M336.5 13V65M337.5 24V58M338.5 14V70M339.5 31V61M340.5 19V61M341.5 18V63M342.5 13V66M343.5 30V59M344.5 27V52M345.5 21V57M346.5 22V51M347.5 16V67M348.5 33V61M349.5 18V65M350.5 28V60M351.5 26V49M352.5 18V62M353.5 15V62M354.5 11V68M355.5 13V64M356.5 18V49M357.5 24V54M358.5 21V61M359.5 13V70M360.5 29V72M361.5 30V57M362.5 15V69M363.5 22V63M364.5 32V68M365.5 20V50M366.5 21V50M367.5 17V60M368.5 32V71M369.5 24V56M370.5 32V59M371.5 26V76M372.5 17V66M373.5 16V62M374.5 21V67M375.5 25V57M376.5 17V68M377.5 32V53M378.5 25V57M379.5 26V50M380.5 31V51M381.5 30V48M382.5 34V44M383.5 37V41" stroke="#3232c8" stroke-width="1"/><path d="M1.5 34V44M2.5 34V44M3.5 34V44M4.5 33V45M5.5 34V44M6.5 33V45M7.5 34V44M8.5 34V44M9.5 34V44M10.5 33V45M11.5 34V44M12.5 34V44M13.5 34V44M14.5 34V44M15.5 34V44M16.5 34V44M17.5 34V44M18.5 34V44M19.5 35V43M20.5 35V43M21.5 35V43M22.5 34V44M23.5 35V43M24.5 34V44M25.5 34V44M26.5 34V44M27.5 34V44M28.5 36V42M29.5 34V44M30.5 34V44M31.5 35V43M32.5 35V43M33.5 34V44M34.5 34V44M35.5 33V45M36.5 34V44M37.5 34V44M38.5 33V45M39.5 35V43M40.5 35V43M41.5 35V43M42.5 33V45M43.5 34V44M44.5 34V44M45.5 34V44M46.5 36V42M47.5 36V42M48.5 37V41M49.5 37V41M50.5 36V42M51.5 36V42M52.5 36V42M53.5 36V42M54.5 36V42M55.5 36V42M56.5 36V42M57.5 36V42M58.5 36V42M59.5 36V42M60.5 36V42M61.5 36V42M62.5 36V42M63.5 36V42M64.5 36V42M65.5 36V42M66.5 37V41M67.5 36V42M68.5 36V42M69.5 36V42M70.5 36V42M71.5 36V42M72.5 35V43M73.5 36V42M74.5 36V42M75.5 36V42M76.5 36V42M77.5 36V42M78.5 36V42M79.5 36V42M80.5 37V41M81.5 36V42M82.5 36V42M83.5 36V42M84.5 36V42M85.5 35V43M86.5 36V42M87.5 36V42M88.5 36V42M89.5 36V42M90.5 36V42M91.5 36V42M92.5 36V42M93.5 36V42M94.5 36V42M95.5 36V42M96.5 36V42M97.5 35V43M98.5 36V42M99.5 36V42M100.5 36V42M101.5 36V42M102.5 36V42M103.5 36V42M104.5 36V42M105.5 36V42M106.5 36V42M107.5 36V42M108.5 36V42M109.5 36V42M110.5 36V42M111.5 36V42M112.5 36V42M113.5 36V42M114.5 36V42M115.5 36V42M116.5 36V42M117.5 36V42M118.5 36V42M119.5 36V42M120.5 36V42M121.5 36V42M122.5 36V42M123.5 36V42M124.5 36V42M125.5 36V42M126.5 36V42M127.5 36V42M128.5 36V42M129.5 36V42M130.5 36V42M131.5 36V42M132.5 36V42M133.5 36V42M134.5 36V42M135.5 36V42M136.5 36V42M137.5 36V42M138.5 36V42M139.5 36V42M140.5 36V42M141.5 35V43M142.5 36V42M143.5 36V42M144.5 36V42M145.5 36V42M146.5 36V42M147.5 35V43M148.5 36V42M149.5 36V42M150.5 36V42M151.5 36V42M152.5 35V43M153.5 36V42M154.5 36V42M155.5 37V41M156.5 36V42M157.5 36V42M158.5 36V42M159.5 36V42M160.5 36V42M161.5 36V42M162.5 36V42M163.5 36V42M164.5 36V42M165.5 36V42M166.5 36V42M167.5 36V42M168.5 35V43M169.5 36V42M170.5 36V42M171.5 35V43M172.5 37V41M173.5 36V42M174.5 36V42M175.5 36V42M176.5 36V42M177.5 36V42M178.5 37V41M179.5 36V42M180.5 36V42M181.5 36V42M182.5 36V42M183.5 36V42M184.5 36V42M185.5 36V42M186.5 36V42M187.5 35V43M188.5 36V42M189.5 36V42M190.5 36V42M191.5 36V42M192.5 36V42M193.5 36V42M194.5 36V42M195.5 36V42M196.5 36V42M197.5 36V42M198.5 36V42M199.5 37V41M200.5 36V42M201.5 36V42M202.5 36V42M203.5 36V42M204.5 36V42M205.5 37V41M206.5 36V42M207.5 36V42M208.5 37V41M209.5 36V42M210.5 37V41M211.5 36V42M212.5 36V42M213.5 36V42M214.5 36V42M215.5 37V41M216.5 36V42M217.5 37V41M218.5 37V41M219.5 36V42M220.5 36V42M221.5 36V42M222.5 35V43M223.5 36V42M224.5 36V42M225.5 36V42M226.5 36V42M227.5 36V42M228.5 36V42M229.5 36V42M230.5 36V42M231.5 36V42M232.5 36V42M233.5 36V42M234.5 36V42M235.5 37V41M236.5 37V41M237.5 36V42M238.5 36V42M239.5 35V43M240.5 36V42M241.5 36V42M242.5 36V42M243.5 36V42M244.5 36V42M245.5 36V42M246.5 36V42M247.5 36V42M248.5 36V42M249.5 36V42M250.5 36V42M251.5 36V42M252.5 36V42M253.5 36V42M254.5 36V42M255.5 36V42M256.5 36V42M257.5 37V41M258.5 36V42M259.5 36V42M260.5 36V42M261.5 35V43M262.5 36V42M263.5 36V42M264.5 36V42M265.5 36V42M266.5 36V42M267.5 36V42M268.5 36V42M269.5 36V42M270.5 36V42M271.5 36V42M272.5 36V42M273.5 36V42M274.5 36V42M275.5 36V42M276.5 36V42M277.5 35V43M278.5 36V42M279.5 36V42M280.5 36V42M281.5 36V42M282.5 36V42M283.5 37V41M284.5 36V42M285.5 36V42M286.5 36V42M287.5 36V42M288.5 37V41M289.5 36V42M290.5 36V42M291.5 36V42M292.5 36V42M293.5 36V42M294.5 36V42M295.5 36V42M296.5 35V43M297.5 36V42M298.5 36V42M299.5 35V43M300.5 37V41M301.5 36V42M302.5 36V42M303.5 36V42M304.5 36V42M305.5 36V42M306.5 36V42M307.5 35V43M308.5 36V42M309.5 36V42M310.5 36V42M311.5 36V42M312.5 36V42M313.5 36V42M314.5 36V42M315.5 36V42M316.5 36V42M317.5 36V42M318.5 36V42M319.5 36V42M320.5 36V42M321.5 36V42M322.5 36V42M323.5 37V41M324.5 36V42M325.5 37V41M326.5 36V42M327.5 35V43M328.5 35V43M329.5 35V43M330.5 35V43M331.5 34V44M332.5 34V44M333.5 33V45M334.5 32V46M335.5 33V45M336.5 32V46M337.5 33V45M338.5 32V46M339.5 33V45M340.5 33V45M341.5 32V46M342.5 33V45M343.5 33V45M344.5 33V45M345.5 32V46M346.5 33V45M347.5 33V45M348.5 34V44M349.5 33V45M350.5 34V44M351.5 33V45M352.5 33V45M353.5 32V46M354.5 33V45M355.5 32V46M356.5 32V46M357.5 33V45M358.5 33V45M359.5 33V45M360.5 32V46M361.5 32V46M362.5 33V45M363.5 32V46M364.5 34V44M365.5 32V46M366.5 32V46M367.5 33V45M368.5 34V44M369.5 32V46M370.5 34V44M371.5 33V45M372.5 33V45M373.5 33V45M374.5 33V45M375.5 33V45M376.5 33V45M377.5 34V44M378.5 33V45M379.5 33V45M380.5 35V43M381.5 36V42M382.5 37V41M383.5 38V40" stroke="#6464dc" stroke-width="1"/></svg>
<div style="left:106px;top:377px;width:677px;height:6px;background:#96958f;border-top:1px solid #3c3c3a;border-bottom:1px solid #3c3c3a;"></div>
<svg style="left:106px;top:383px" width="677" height="79" shape-rendering="crispEdges"><rect x="0" y="0" width="384" height="79" fill="#c0c0c0"/><rect x="384" y="0" width="293" height="79" fill="#d9d9d9"/><rect x="384" y="0" width="1" height="79" fill="#a6a6a6"/><path d="M1.5 27V56M2.5 23V59M3.5 31V52M4.5 28V51M5.5 24V49M6.5 30V53M7.5 24V49M8.5 27V57M9.5 21V47M10.5 20V57M11.5 26V55M12.5 29V51M13.5 26V56M14.5 24V58M15.5 20V45M16.5 20V61M17.5 19V64M18.5 22V60M19.5 19V58M20.5 23V61M21.5 25V54M22.5 20V64M23.5 21V60M24.5 19V65M25.5 18V60M26.5 33V55M27.5 21V61M28.5 35V59M29.5 33V57M30.5 25V54M31.5 21V59M32.5 20V47M33.5 27V55M34.5 30V50M35.5 29V58M36.5 8V79M37.5 9V71M38.5 31V53M39.5 33V54M40.5 26V56M41.5 26V45M42.5 29V54M43.5 30V50M44.5 32V49M45.5 24V56M46.5 35V46M47.5 34V45M48.5 34V46M49.5 36V44M50.5 35V44M51.5 33V47M52.5 33V52M53.5 28V55M54.5 31V54M55.5 28V51M56.5 28V53M57.5 34V49M58.5 35V50M59.5 35V47M60.5 24V55M61.5 26V51M62.5 31V53M63.5 33V49M64.5 26V52M65.5 25V55M66.5 28V43M67.5 25V44M68.5 25V47M69.5 25V55M70.5 34V53M71.5 25V53M72.5 20V62M73.5 18V64M74.5 25V45M75.5 24V58M76.5 19V60M77.5 24V60M78.5 31V51M79.5 33V46M80.5 35V47M81.5 29V51M82.5 29V53M83.5 31V49M84.5 31V46M85.5 29V53M86.5 35V47M87.5 35V44M88.5 35V45M89.5 33V48M90.5 29V50M91.5 14V45M92.5 19V57M93.5 26V53M94.5 28V56M95.5 30V49M96.5 33V54M97.5 27V55M98.5 22V56M99.5 23V46M100.5 25V46M101.5 29V55M102.5 31V48M103.5 35V48M104.5 35V54M105.5 31V48M106.5 24V52M107.5 26V59M108.5 20V47M109.5 19V64M110.5 20V45M111.5 17V64M112.5 35V52M113.5 30V50M114.5 25V54M115.5 27V51M116.5 28V51M117.5 29V54M118.5 24V55M119.5 21V61M120.5 20V55M121.5 20V62M122.5 26V58M123.5 30V49M124.5 23V61M125.5 25V57M126.5 35V54M127.5 33V45M128.5 33V49M129.5 35V51M130.5 22V61M131.5 23V61M132.5 28V54M133.5 33V47M134.5 11V73M135.5 29V51M136.5 32V51M137.5 31V48M138.5 27V55M139.5 34V55M140.5 28V53M141.5 13V70M142.5 31V51M143.5 28V44M144.5 34V50M145.5 29V52M146.5 29V53M147.5 31V47M148.5 31V45M149.5 33V47M150.5 32V52M151.5 8V74M152.5 6V76M153.5 19V77M154.5 24V55M155.5 36V58M156.5 31V51M157.5 24V58M158.5 25V56M159.5 33V47M160.5 24V59M161.5 26V57M162.5 30V51M163.5 31V47M164.5 26V52M165.5 30V56M166.5 25V52M167.5 30V49M168.5 28V53M169.5 34V46M170.5 30V44M171.5 31V51M172.5 36V49M173.5 28V53M174.5 23V54M175.5 25V54M176.5 20V63M177.5 19V57M178.5 36V50M179.5 24V60M180.5 29V50M181.5 27V56M182.5 22V58M183.5 30V52M184.5 29V51M185.5 32V51M186.5 27V44M187.5 30V54M188.5 31V49M189.5 24V52M190.5 23V59M191.5 18V50M192.5 23V58M193.5 27V53M194.5 21V64M195.5 25V53M196.5 28V52M197.5 33V45M198.5 24V52M199.5 36V53M200.5 32V52M201.5 25V52M202.5 30V55M203.5 26V52M204.5 24V53M205.5 29V43M206.5 29V54M207.5 29V54M208.5 36V51M209.5 24V54M210.5 34V42M211.5 28V50M212.5 27V53M213.5 25V56M214.5 33V50M215.5 30V43M216.5 29V55M217.5 36V43M218.5 33V42M219.5 18V67M220.5 26V61M221.5 17V62M222.5 22V62M223.5 28V55M224.5 20V62M225.5 27V55M226.5 29V45M227.5 26V55M228.5 35V55M229.5 28V54M230.5 22V54M231.5 22V59M232.5 31V45M233.5 27V53M234.5 31V54M235.5 36V49M236.5 36V51M237.5 23V55M238.5 26V51M239.5 22V61M240.5 27V52M241.5 23V55M242.5 23V52M243.5 32V49M244.5 28V57M245.5 25V54M246.5 19V45M247.5 29V53M248.5 32V47M249.5 21V56M250.5 25V50M251.5 22V57M252.5 26V60M253.5 34V45M254.5 20V58M255.5 18V57M256.5 35V59M257.5 23V44M258.5 33V50M259.5 34V45M260.5 29V53M261.5 30V51M262.5 11V69M263.5 27V50M264.5 32V50M265.5 23V53M266.5 30V51M267.5 29V57M268.5 29V45M269.5 12V67M270.5 31V47M271.5 34V51M272.5 21V59M273.5 20V62M274.5 24V55M275.5 26V57M276.5 29V48M277.5 13V69M278.5 17V66M279.5 34V46M280.5 29V57M281.5 20V57M282.5 28V59M283.5 36V44M284.5 18V56M285.5 14V68M286.5 23V54M287.5 31V47M288.5 36V48M289.5 33V48M290.5 26V55M291.5 35V46M292.5 20V63M293.5 29V54M294.5 28V50M295.5 29V55M296.5 25V54M297.5 31V45M298.5 21V56M299.5 31V47M300.5 36V51M301.5 30V54M302.5 34V53M303.5 27V45M304.5 31V52M305.5 29V55M306.5 23V56M307.5 20V57M308.5 22V62M309.5 30V51M310.5 33V48M311.5 22V45M312.5 23V51M313.5 24V55M314.5 35V62M315.5 28V53M316.5 21V59M317.5 19V60M318.5 22V58M319.5 20V60M320.5 25V52M321.5 24V60M322.5 32V50M323.5 36V46M324.5 20V61M325.5 35V47M326.5 32V47M327.5 24V59M328.5 21V56M329.5 22V61M330.5 17V65M331.5 15V67M332.5 20V62M333.5 24V59M334.5 18V65M335.5 21V56M336.5 15V67M337.5 25V58M338.5 12V72M339.5 31V62M340.5 17V63M341.5 20V62M342.5 11V69M343.5 31V62M344.5 26V54M345.5 20V59M346.5 23V51M347.5 18V67M348.5 33V62M349.5 19V64M350.5 28V61M351.5 26V49M352.5 19V62M353.5 15V64M354.5 13V72M355.5 13V64M356.5 17V49M357.5 24V53M358.5 22V61M359.5 13V70M360.5 28V72M361.5 30V56M362.5 16V67M363.5 22V65M364.5 33V69M365.5 19V51M366.5 21V51M367.5 18V62M368.5 32V70M369.5 25V58M370.5 33V62M371.5 27V77M372.5 15V68M373.5 18V64M374.5 20V68M375.5 26V58M376.5 16V69M377.5 32V53M378.5 26V59M379.5 28V50M380.5 31V53M381.5 31V48M382.5 35V44M383.5 38V41" stroke="#3232c8" stroke-width="1"/><path d="M1.5 34V45M2.5 34V45M3.5 34V45M4.5 34V45M5.5 35V44M6.5 34V45M7.5 34V45M8.5 35V44M9.5 34V45M10.5 34V45M11.5 35V44M12.5 34V45M13.5 34V45M14.5 35V44M15.5 35V44M16.5 35V44M17.5 35V44M18.5 34V45M19.5 35V44M20.5 35V44M21.5 35V44M22.5 34V45M23.5 35V44M24.5 34V45M25.5 34V45M26.5 34V45M27.5 35V44M28.5 36V43M29.5 34V45M30.5 35V44M31.5 35V44M32.5 35V44M33.5 35V44M34.5 35V44M35.5 34V45M36.5 35V44M37.5 34V45M38.5 34V45M39.5 35V44M40.5 35V44M41.5 35V44M42.5 34V45M43.5 34V45M44.5 34V45M45.5 35V44M46.5 36V43M47.5 37V42M48.5 37V42M49.5 37V42M50.5 37V42M51.5 36V43M52.5 36V43M53.5 37V42M54.5 37V42M55.5 36V43M56.5 37V42M57.5 36V43M58.5 36V43M59.5 36V43M60.5 37V42M61.5 37V42M62.5 36V43M63.5 37V42M64.5 37V42M65.5 36V43M66.5 37V42M67.5 37V42M68.5 36V43M69.5 36V43M70.5 37V42M71.5 36V43M72.5 36V43M73.5 36V43M74.5 36V43M75.5 36V43M76.5 36V43M77.5 36V43M78.5 37V42M79.5 37V42M80.5 37V42M81.5 37V42M82.5 36V43M83.5 36V43M84.5 36V43M85.5 36V43M86.5 36V43M87.5 36V43M88.5 36V43M89.5 36V43M90.5 37V42M91.5 36V43M92.5 36V43M93.5 37V42M94.5 36V43M95.5 37V42M96.5 36V43M97.5 36V43M98.5 36V43M99.5 37V42M100.5 36V43M101.5 37V42M102.5 37V42M103.5 36V43M104.5 36V43M105.5 36V43M106.5 37V42M107.5 37V42M108.5 37V42M109.5 36V43M110.5 36V43M111.5 36V43M112.5 37V42M113.5 36V43M114.5 36V43M115.5 37V42M116.5 37V42M117.5 37V42M118.5 36V43M119.5 36V43M120.5 36V43M121.5 37V42M122.5 37V42M123.5 36V43M124.5 36V43M125.5 36V43M126.5 37V42M127.5 36V43M128.5 37V42M129.5 36V43M130.5 37V42M131.5 37V42M132.5 36V43M133.5 37V42M134.5 37V42M135.5 36V43M136.5 37V42M137.5 36V43M138.5 37V42M139.5 36V43M140.5 36V43M141.5 36V43M142.5 36V43M143.5 36V43M144.5 36V43M145.5 36V43M146.5 37V42M147.5 36V43M148.5 36V43M149.5 37V42M150.5 36V43M151.5 36V43M152.5 36V43M153.5 36V43M154.5 36V43M155.5 37V42M156.5 36V43M157.5 37V42M158.5 37V42M159.5 36V43M160.5 36V43M161.5 37V42M162.5 37V42M163.5 36V43M164.5 36V43M165.5 36V43M166.5 36V43M167.5 37V42M168.5 36V43M169.5 37V42M170.5 36V43M171.5 36V43M172.5 37V42M173.5 36V43M174.5 36V43M175.5 36V43M176.5 36V43M177.5 36V43M178.5 37V42M179.5 36V43M180.5 37V42M181.5 37V42M182.5 36V43M183.5 36V43M184.5 37V42M185.5 37V42M186.5 36V43M187.5 36V43M188.5 36V43M189.5 37V42M190.5 37V42M191.5 37V42M192.5 37V42M193.5 36V43M194.5 37V42M195.5 36V43M196.5 36V43M197.5 36V43M198.5 36V43M199.5 37V42M200.5 36V43M201.5 36V43M202.5 37V42M203.5 36V43M204.5 36V43M205.5 37V42M206.5 37V42M207.5 36V43M208.5 37V42M209.5 37V42M210.5 37V42M211.5 37V42M212.5 36V43M213.5 36V43M214.5 36V43M215.5 37V42M216.5 36V43M217.5 37V42M218.5 37V42M219.5 37V42M220.5 37V42M221.5 36V43M222.5 36V43M223.5 37V42M224.5 37V42M225.5 37V42M226.5 36V43M227.5 37V42M228.5 36V43M229.5 36V43M230.5 36V43M231.5 36V43M232.5 37V42M233.5 37V42M234.5 36V43M235.5 37V42M236.5 37V42M237.5 36V43M238.5 36V43M239.5 36V43M240.5 36V43M241.5 37V42M242.5 37V42M243.5 37V42M244.5 37V42M245.5 36V43M246.5 36V43M247.5 36V43M248.5 36V43M249.5 36V43M250.5 36V43M251.5 36V43M252.5 36V43M253.5 36V43M254.5 37V42M255.5 37V42M256.5 37V42M257.5 37V42M258.5 36V43M259.5 37V42M260.5 37V42M261.5 36V43M262.5 36V43M263.5 37V42M264.5 36V43M265.5 36V43M266.5 36V43M267.5 37V42M268.5 36V43M269.5 36V43M270.5 36V43M271.5 36V43M272.5 36V43M273.5 36V43M274.5 36V43M275.5 36V43M276.5 36V43M277.5 36V43M278.5 37V42M279.5 37V42M280.5 36V43M281.5 36V43M282.5 36V43M283.5 37V42M284.5 37V42M285.5 36V43M286.5 37V42M287.5 36V43M288.5 37V42M289.5 36V43M290.5 37V42M291.5 37V42M292.5 36V43M293.5 37V42M294.5 36V43M295.5 37V42M296.5 36V43M297.5 36V43M298.5 36V43M299.5 36V43M300.5 37V42M301.5 37V42M302.5 36V43M303.5 37V42M304.5 36V43M305.5 36V43M306.5 36V43M307.5 36V43M308.5 36V43M309.5 36V43M310.5 36V43M311.5 36V43M312.5 37V42M313.5 36V43M314.5 36V43M315.5 37V42M316.5 37V42M317.5 37V42M318.5 36V43M319.5 37V42M320.5 36V43M321.5 36V43M322.5 36V43M323.5 37V42M324.5 36V43M325.5 36V43M326.5 36V43M327.5 35V44M328.5 36V43M329.5 35V44M330.5 35V44M331.5 34V45M332.5 35V44M333.5 33V46M334.5 33V46M335.5 33V46M336.5 32V47M337.5 34V45M338.5 32V47M339.5 34V45M340.5 34V45M341.5 33V46M342.5 33V46M343.5 33V46M344.5 33V46M345.5 33V46M346.5 34V45M347.5 34V45M348.5 35V44M349.5 34V45M350.5 34V45M351.5 34V45M352.5 33V46M353.5 32V47M354.5 34V45M355.5 32V47M356.5 33V46M357.5 34V45M358.5 33V46M359.5 33V46M360.5 32V47M361.5 33V46M362.5 34V45M363.5 32V47M364.5 34V45M365.5 33V46M366.5 33V46M367.5 34V45M368.5 34V45M369.5 32V47M370.5 35V44M371.5 33V46M372.5 33V46M373.5 34V45M374.5 34V45M375.5 34V45M376.5 34V45M377.5 34V45M378.5 34V45M379.5 33V46M380.5 35V44M381.5 36V43M382.5 38V41M383.5 39V40" stroke="#6464dc" stroke-width="1"/></svg>
<span class="t vrb" style="left:69.3px;width:32px;text-align:right;top:300px;">1,0</span>
<span class="t vr" style="left:69.6px;width:32px;text-align:right;top:314px;">0,5</span>
<div style="left:105px;top:318px;width:2px;height:1px;background:#333;"></div>
<span class="t vrb" style="left:69.3px;width:32px;text-align:right;top:333px;">0,0</span>
<div style="left:103px;top:337px;width:4px;height:1px;background:#111;"></div>
<span class="t vr" style="left:69.6px;width:32px;text-align:right;top:353px;">-0,5</span>
<div style="left:105px;top:357px;width:2px;height:1px;background:#333;"></div>
<span class="t vrb" style="left:69.3px;width:32px;text-align:right;top:367px;">-1,0</span>
<span class="t vrb" style="left:69.3px;width:32px;text-align:right;top:384px;">1,0</span>
<span class="t vr" style="left:69.6px;width:32px;text-align:right;top:398px;">0,5</span>
<div style="left:105px;top:402px;width:2px;height:1px;background:#333;"></div>
<span class="t vrb" style="left:69.3px;width:32px;text-align:right;top:417px;">0,0</span>
<div style="left:103px;top:421px;width:4px;height:1px;background:#111;"></div>
<span class="t vr" style="left:69.6px;width:32px;text-align:right;top:437px;">-0,5</span>
<div style="left:105px;top:441px;width:2px;height:1px;background:#333;"></div>
<span class="t vrb" style="left:69.3px;width:32px;text-align:right;top:452px;">-1,0</span>
<div style="left:788px;top:126px;width:11px;height:359px;background:#c5c3bd;"></div>
<div style="left:788px;top:127px;width:11px;height:11px;background:#e1dfda;border:1px solid;border-color:#f7f6f3 #7f7d77 #7f7d77 #f7f6f3;"></div>
<svg style="left:791px;top:131px" width="5" height="4"><path d="M2.500 0.300L5 3.500H0Z" fill="#8e8c87"/></svg>
<div style="left:788px;top:138px;width:11px;height:324px;background:#e1dfda;border:1px solid;border-color:#f7f6f3 #7f7d77 #7f7d77 #f7f6f3;"></div>
<div style="left:788px;top:473px;width:11px;height:11px;background:#e1dfda;border:1px solid;border-color:#f7f6f3 #7f7d77 #7f7d77 #f7f6f3;"></div>
<svg style="left:791px;top:477.500px" width="5" height="4"><path d="M0 0.300H5L2.500 3.600Z" fill="#111"/></svg>
<div style="left:0;top:485px;width:799px;height:12px;background:#dcdad5;"></div>
<div style="left:106px;top:485px;width:681px;height:12px;background:#c5c3bd;"></div>
<div style="left:106px;top:486px;width:11px;height:11px;background:#e1dfda;border:1px solid;border-color:#f7f6f3 #7f7d77 #7f7d77 #f7f6f3;"></div>
<svg style="left:109.500px;top:488.500px" width="4" height="6"><path d="M0.300 3L3.600 0.300V5.700Z" fill="#8e8c87"/></svg>
<div style="left:118px;top:486px;width:530px;height:11px;background:#e1dfda;border:1px solid;border-color:#f7f6f3 #7f7d77 #7f7d77 #f7f6f3;"></div>
<div style="left:776px;top:486px;width:11px;height:11px;background:#e1dfda;border:1px solid;border-color:#f7f6f3 #7f7d77 #7f7d77 #f7f6f3;"></div>
<svg style="left:779.500px;top:488.500px" width="4" height="6"><path d="M3.700 3L0.300 0.300V5.700Z" fill="#111"/></svg>
<div style="left:0px;top:497px;width:799px;height:1px;background:#f4f3f0;"></div>
<div style="left:0px;top:498px;width:799px;height:1px;background:#c9c6c0;"></div>
<div class="grip" style="left:2px;top:499px;height:42px;"></div>
<span class="t lbl" style="left:10px;top:505px;">Частота проекта</span>
<div style="left:10px;top:519px;width:42px;height:20px;background:#fff;border:1px solid;border-color:#6e6c67 #e8e6e2 #e8e6e2 #6e6c67;"></div>
<span class="t" style="left:13px;top:525px;font-size:8.5px;">44100</span>
<div class="btn" style="left:52px;top:519px;width:20px;height:20px;border-color:#f7f6f3 #5a5853 #5a5853 #f7f6f3;"></div>
<svg style="left:56px;top:526px" width="12" height="7"><path d="M0.500 0.500H11.500L6 6.500Z" fill="#111"/></svg>
<div style="left:100px;top:518px;width:1px;height:21px;background:#a5a29b;"></div>
<div style="left:101px;top:518px;width:1px;height:21px;background:#f4f3f0;"></div>
<span class="t lbl" style="left:108px;top:525px;">Прилипать к линейке</span>
<div style="left:215px;top:523px;width:11px;height:11px;background:#fff;border:1px solid #2a2a2a;"></div>
<span class="t lbl" style="left:236px;top:505px;">Начало выделения:</span>
<div style="left:335.5px;top:504.0px;width:11px;height:11px;border-radius:50%;background:#fff;border:1px solid #333;"></div>
<div style="left:339px;top:507.5px;width:4px;height:4px;border-radius:50%;background:#111;"></div>
<span class="t lbl" style="left:351px;top:505px;">Конец</span>
<div style="left:386.0px;top:504.0px;width:11px;height:11px;border-radius:50%;background:#fff;border:1px solid #333;"></div>
<span class="t lbl" style="left:402px;top:505px;">Длительность</span>
<div style="left:475px;top:518px;width:1px;height:21px;background:#a5a29b;"></div>
<div style="left:476px;top:518px;width:1px;height:21px;background:#f4f3f0;"></div>
<span class="t lbl" style="left:481px;top:505px;">Текущая позиция:</span>
<div class="tc" style="left:236px;"><span class="t d" style="left:2.2px;">0</span><span class="t d" style="left:9.3px;">0</span><span class="t u" style="left:19.8px;">h</span><span class="t d" style="left:29.4px;">0</span><span class="t d" style="left:36.4px;">0</span><span class="t u" style="left:47.4px;">m</span><span class="t d" style="left:59.9px;">2</span><span class="t d" style="left:66.9px;">0</span><span class="t u" style="left:78px;">s</span><div style="left:84px;top:0;width:7px;height:15px;background:#d6d4cf;border-left:1px solid #e8e7e3;"></div><svg style="left:84px;top:5px" width="8" height="5"><path d="M0.500 0.500H7.500L4 4.500Z" fill="#111"/></svg></div>
<div class="tc" style="left:335px;"><span class="t d" style="left:2.2px;">0</span><span class="t d" style="left:9.3px;">0</span><span class="t u" style="left:19.8px;">h</span><span class="t d" style="left:29.4px;">0</span><span class="t d" style="left:36.4px;">1</span><span class="t u" style="left:47.4px;">m</span><span class="t d" style="left:59.9px;">0</span><span class="t d" style="left:66.9px;">0</span><span class="t u" style="left:78px;">s</span><div style="left:84px;top:0;width:7px;height:15px;background:#d6d4cf;border-left:1px solid #e8e7e3;"></div><svg style="left:84px;top:5px" width="8" height="5"><path d="M0.500 0.500H7.500L4 4.500Z" fill="#111"/></svg></div>
<div class="tc" style="left:481px;"><span class="t d" style="left:2.2px;">0</span><span class="t d" style="left:9.3px;">0</span><span class="t u" style="left:19.8px;">h</span><span class="t d" style="left:29.4px;">0</span><span class="t d" style="left:36.4px;">0</span><span class="t u" style="left:47.4px;">m</span><span class="t d" style="left:59.9px;">0</span><span class="t d" style="left:66.9px;">0</span><span class="t u" style="left:78px;">s</span><div style="left:84px;top:0;width:7px;height:15px;background:#d6d4cf;border-left:1px solid #e8e7e3;"></div><svg style="left:84px;top:5px" width="8" height="5"><path d="M0.500 0.500H7.500L4 4.500Z" fill="#111"/></svg></div>
<div style="left:0px;top:541px;width:799px;height:1px;background:#f4f3f0;"></div>
<div style="left:0px;top:540px;width:799px;height:1px;background:#cac7c1;"></div>
<div style="left:2px;top:544px;width:696px;height:17px;border:1px solid;border-color:#aeaba4 #f6f5f2 #f6f5f2 #aeaba4;"></div>
<div style="left:700px;top:544px;width:99px;height:17px;border:1px solid;border-color:#aeaba4 #f6f5f2 #f6f5f2 #aeaba4;"></div>
<span class="t" style="left:703px;top:548.5px;font-size:9.75px;color:#222;letter-spacing:0.08px;">Действительная ч</span>
<svg style="left:782px;top:544px" width="17" height="17"><path d="M2 17L17 2M7 17L17 7M12 17L17 12" stroke="#8d8a84" stroke-width="0.9"/><path d="M3 17L17 3M8 17L17 8M13 17L17 13" stroke="#f6f5f2" stroke-width="0.9"/></svg>
</div></body></html>
